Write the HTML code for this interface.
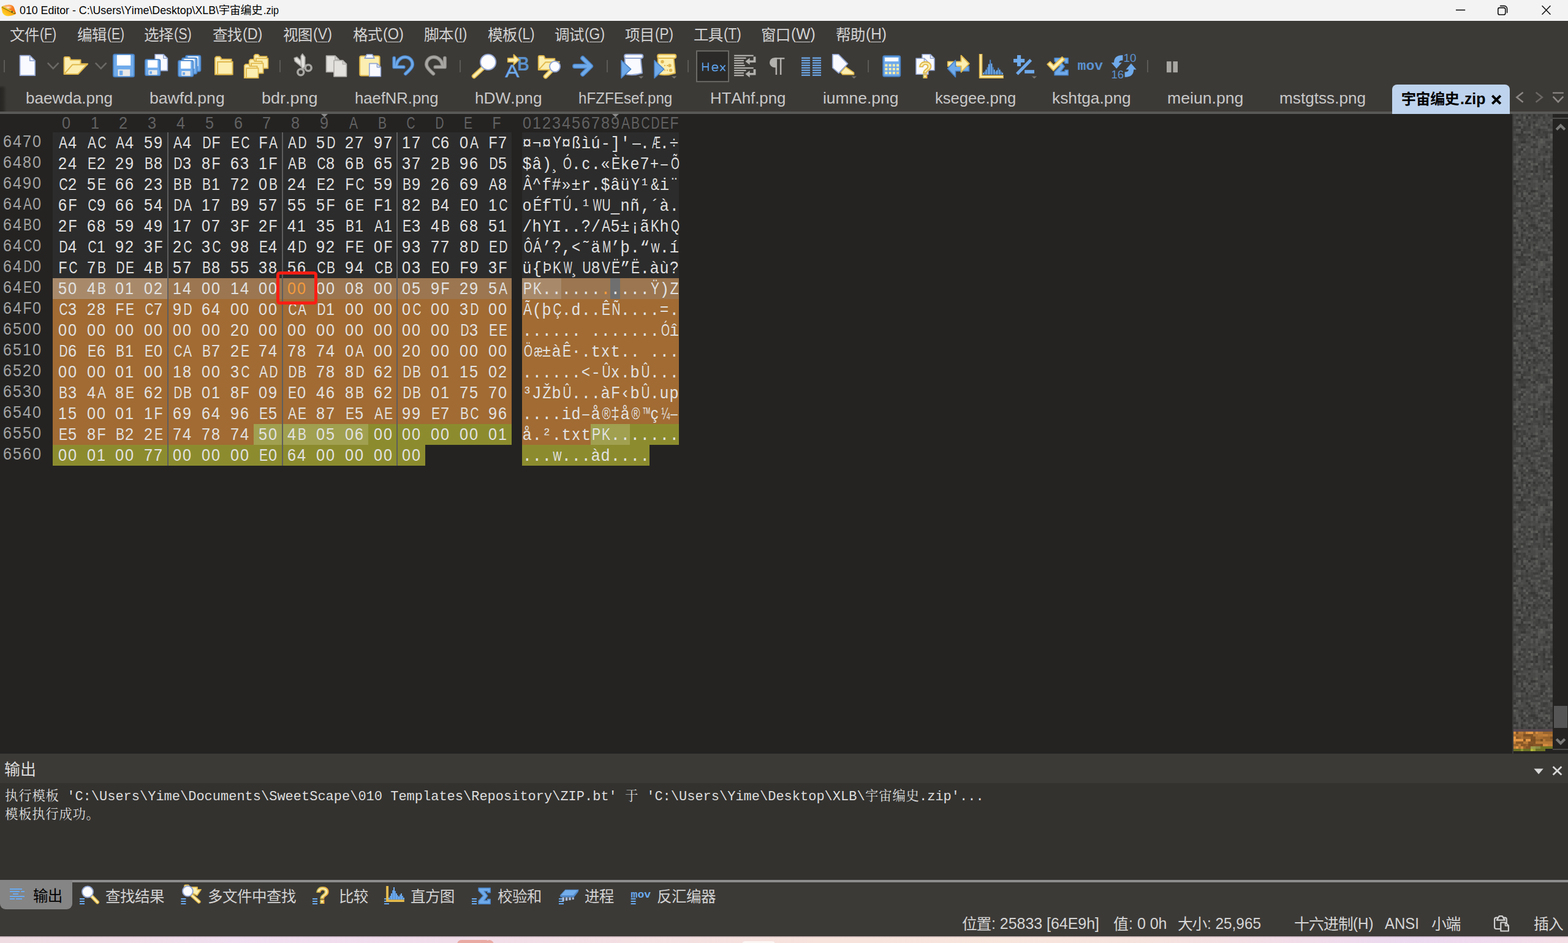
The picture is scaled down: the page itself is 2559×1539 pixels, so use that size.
<!DOCTYPE html>
<html lang="zh"><head><meta charset="utf-8"><title>010 Editor</title><style>
html,body{margin:0;padding:0;background:#3c3a37;}
body{width:2559px;height:1539px;position:relative;overflow:hidden;font-family:"Liberation Sans",sans-serif;font-kerning:none;}
div,span,svg,b,i{position:absolute;box-sizing:border-box}
.t{white-space:pre;transform-origin:0 0;line-height:1}

.r{left:0;width:1120px;height:34px;white-space:nowrap}
.ad{left:4px;top:0;height:34px;color:#a3a3a3}
.hx{left:86.0px;top:0;height:34px;color:#e2e2e2;font-size:0}
.as{left:852.0px;top:0;height:34px;color:#e2e2e2;font-size:0}
.r b{position:static;display:inline-block;width:46.8px;padding-left:7.80px;font-weight:normal;height:34px}
.r i{position:static;display:inline-block;width:16.0px;text-align:center;font-style:normal;font-size:28px;line-height:30px;height:34px;overflow:visible}
.r .hx i,.r .as i{line-height:34px}
.r.hd .hx i,.r.hd .as i{color:#626262;line-height:37px}
.k50{transform:scaleX(0.50)}.k53{transform:scaleX(0.53)}.k56{transform:scaleX(0.56)}.k60{transform:scaleX(0.60)}.k64{transform:scaleX(0.64)}.k68{transform:scaleX(0.68)}.k69{transform:scaleX(0.69)}.k74{transform:scaleX(0.74)}.k75{transform:scaleX(0.75)}.k82{transform:scaleX(0.82)}.k86{transform:scaleX(0.86)}.k90{transform:scaleX(0.90)}.r i.km{font-family:"Liberation Mono";transform:scaleX(.95);font-size:27.5px}.o{font-family:"Liberation Mono";font-size:22px;color:#dedede;white-space:pre;line-height:1;letter-spacing:0}</style></head><body><div style="left:0px;top:0px;width:2559px;height:34px;background:#f3f3f3;"></div>
<div style="left:0px;top:34px;width:2559px;height:148px;background:#3c3a37;"></div>
<div style="left:0px;top:182px;width:2559px;height:4px;background:#595957;"></div>
<div style="left:0px;top:186px;width:2559px;height:1044px;background:#242322;"></div>
<div style="left:0px;top:1230px;width:2559px;height:48px;background:#3c3a37;"></div>
<div style="left:0px;top:1278px;width:2559px;height:158px;background:#33322f;"></div>
<div style="left:0px;top:1436px;width:2559px;height:92px;background:#3c3a37;"></div>
<div style="left:0px;top:1528px;width:2559px;height:11px;background:linear-gradient(90deg,#efdce2 0%,#f0dce6 8%,#f1def0 15%,#f0dcec 25%,#f4dfe3 40%,#f7e2dc 52%,#f8e5dc 64%,#f6e2de 74%,#f2dde8 82%,#ecd9f0 90%,#f0daee 95%,#f5e0e6 100%);"></div>
<div style="left:86.0px;top:216px;width:748.8px;height:238px;background:#2c2c2c;"></div>
<div style="left:852.0px;top:216px;width:256.0px;height:238px;background:#2c2c2c;"></div>
<div style="left:86.0px;top:454px;width:748.8px;height:34px;background:#9b7650;"></div>
<div style="left:86.0px;top:454px;width:187.2px;height:34px;background:#a88a6b;"></div>
<div style="left:852.0px;top:454px;width:256.0px;height:34px;background:#9b7650;"></div>
<div style="left:852.0px;top:454px;width:64.0px;height:34px;background:#a88a6b;"></div>
<div style="left:996.0px;top:454px;width:16.0px;height:34px;background:#6f6f6f;"></div>
<div style="left:86.0px;top:488px;width:748.8px;height:204px;background:#a16b33;"></div>
<div style="left:852.0px;top:488px;width:256.0px;height:204px;background:#a16b33;"></div>
<div style="left:86.0px;top:692px;width:327.59999999999997px;height:34px;background:#a16b33;"></div>
<div style="left:413.59999999999997px;top:692px;width:187.2px;height:34px;background:#a0a050;"></div>
<div style="left:600.8px;top:692px;width:234.0px;height:34px;background:#8c8c2e;"></div>
<div style="left:852.0px;top:692px;width:112.0px;height:34px;background:#a16b33;"></div>
<div style="left:964.0px;top:692px;width:64.0px;height:34px;background:#a0a050;"></div>
<div style="left:1028.0px;top:692px;width:80.0px;height:34px;background:#8c8c2e;"></div>
<div style="left:86.0px;top:726px;width:608.4px;height:34px;background:#8c8c2e;"></div>
<div style="left:852.0px;top:726px;width:208.0px;height:34px;background:#8c8c2e;"></div>
<div style="left:273px;top:216px;width:2px;height:544px;background:#5e5e5e;"></div>
<div style="left:460px;top:216px;width:2px;height:544px;background:#5e5e5e;"></div>
<div style="left:647px;top:216px;width:2px;height:544px;background:#5e5e5e;"></div>
<div class="r hd" style="top:182px"><div class="hx"><b><i class="k90" style="margin-left:6px">0</i></b><b><i class="k90" style="margin-left:6px">1</i></b><b><i class="k90" style="margin-left:6px">2</i></b><b><i class="k90" style="margin-left:6px">3</i></b><b><i class="k90" style="margin-left:6px">4</i></b><b><i class="k90" style="margin-left:6px">5</i></b><b><i class="k90" style="margin-left:6px">6</i></b><b><i class="k90" style="margin-left:6px">7</i></b><b><i class="k90" style="margin-left:6px">8</i></b><b><i class="k90" style="margin-left:6px">9</i></b><b><i class="k75" style="margin-left:6px">A</i></b><b><i class="k75" style="margin-left:6px">B</i></b><b><i class="k69" style="margin-left:6px">C</i></b><b><i class="k69" style="margin-left:6px">D</i></b><b><i class="k75" style="margin-left:6px">E</i></b><b><i class="k82" style="margin-left:6px">F</i></b></div><div class="as"><i class="k90">0</i><i class="k90">1</i><i class="k90">2</i><i class="k90">3</i><i class="k90">4</i><i class="k90">5</i><i class="k90">6</i><i class="k90">7</i><i class="k90">8</i><i class="k90">9</i><i class="k75">A</i><i class="k75">B</i><i class="k69">C</i><i class="k69">D</i><i class="k75">E</i><i class="k82">F</i></div></div>
<div class="r" style="top:216px"><div class="ad" style="font-size:0"><i class="k90">6</i><i class="k90">4</i><i class="k90">7</i><i class="k90">0</i></div><div class="hx"><b><i class="k75">A</i><i class="k90">4</i></b><b><i class="k75">A</i><i class="k69">C</i></b><b><i class="k75">A</i><i class="k90">4</i></b><b><i class="k90">5</i><i class="k90">9</i></b><b><i class="k75">A</i><i class="k90">4</i></b><b><i class="k69">D</i><i class="k82">F</i></b><b><i class="k75">E</i><i class="k69">C</i></b><b><i class="k82">F</i><i class="k75">A</i></b><b><i class="k75">A</i><i class="k69">D</i></b><b><i class="k90">5</i><i class="k69">D</i></b><b><i class="k90">2</i><i class="k90">7</i></b><b><i class="k90">9</i><i class="k90">7</i></b><b><i class="k90">1</i><i class="k90">7</i></b><b><i class="k69">C</i><i class="k90">6</i></b><b><i class="k90">0</i><i class="k75">A</i></b><b><i class="k82">F</i><i class="k90">7</i></b></div><div class="as"><i class="k90">¤</i><i class="k86">¬</i><i class="k90">¤</i><i class="k75">Y</i><i class="k90">¤</i><i class="k82">ß</i><i class="km">ì</i><i class="k90">ú</i><i class="km">-</i><i class="km">]</i><i class="km">'</i><i class="k50">—</i><i class="km">.</i><i class="k50">Æ</i><i class="km">.</i><i class="k90">÷</i></div></div>
<div class="r" style="top:250px"><div class="ad" style="font-size:0"><i class="k90">6</i><i class="k90">4</i><i class="k90">8</i><i class="k90">0</i></div><div class="hx"><b><i class="k90">2</i><i class="k90">4</i></b><b><i class="k75">E</i><i class="k90">2</i></b><b><i class="k90">2</i><i class="k90">9</i></b><b><i class="k75">B</i><i class="k90">8</i></b><b><i class="k69">D</i><i class="k90">3</i></b><b><i class="k90">8</i><i class="k82">F</i></b><b><i class="k90">6</i><i class="k90">3</i></b><b><i class="k90">1</i><i class="k82">F</i></b><b><i class="k75">A</i><i class="k75">B</i></b><b><i class="k69">C</i><i class="k90">8</i></b><b><i class="k90">6</i><i class="k75">B</i></b><b><i class="k90">6</i><i class="k90">5</i></b><b><i class="k90">3</i><i class="k90">7</i></b><b><i class="k90">2</i><i class="k75">B</i></b><b><i class="k90">9</i><i class="k90">6</i></b><b><i class="k69">D</i><i class="k90">5</i></b></div><div class="as"><i class="k90">$</i><i class="k90">â</i><i class="km">)</i><i class="km">¸</i><i class="k64">Ó</i><i class="km">.</i><i class="k90">c</i><i class="km">.</i><i class="k90">«</i><i class="k75">È</i><i class="k90">k</i><i class="k90">e</i><i class="k90">7</i><i class="k86">+</i><i class="k74">–</i><i class="k64">Õ</i></div></div>
<div class="r" style="top:284px"><div class="ad" style="font-size:0"><i class="k90">6</i><i class="k90">4</i><i class="k90">9</i><i class="k90">0</i></div><div class="hx"><b><i class="k69">C</i><i class="k90">2</i></b><b><i class="k90">5</i><i class="k75">E</i></b><b><i class="k90">6</i><i class="k90">6</i></b><b><i class="k90">2</i><i class="k90">3</i></b><b><i class="k75">B</i><i class="k75">B</i></b><b><i class="k75">B</i><i class="k90">1</i></b><b><i class="k90">7</i><i class="k90">2</i></b><b><i class="k90">0</i><i class="k75">B</i></b><b><i class="k90">2</i><i class="k90">4</i></b><b><i class="k75">E</i><i class="k90">2</i></b><b><i class="k82">F</i><i class="k69">C</i></b><b><i class="k90">5</i><i class="k90">9</i></b><b><i class="k75">B</i><i class="k90">9</i></b><b><i class="k90">2</i><i class="k90">6</i></b><b><i class="k90">6</i><i class="k90">9</i></b><b><i class="k75">A</i><i class="k90">8</i></b></div><div class="as"><i class="k75">Â</i><i class="k90">^</i><i class="km">f</i><i class="k90">#</i><i class="k90">»</i><i class="k90">±</i><i class="km">r</i><i class="km">.</i><i class="k90">$</i><i class="k90">â</i><i class="k90">ü</i><i class="k75">Y</i><i class="km">¹</i><i class="k75">&amp;</i><i class="km">i</i><i class="km">¨</i></div></div>
<div class="r" style="top:318px"><div class="ad" style="font-size:0"><i class="k90">6</i><i class="k90">4</i><i class="k75">A</i><i class="k90">0</i></div><div class="hx"><b><i class="k90">6</i><i class="k82">F</i></b><b><i class="k69">C</i><i class="k90">9</i></b><b><i class="k90">6</i><i class="k90">6</i></b><b><i class="k90">5</i><i class="k90">4</i></b><b><i class="k69">D</i><i class="k75">A</i></b><b><i class="k90">1</i><i class="k90">7</i></b><b><i class="k75">B</i><i class="k90">9</i></b><b><i class="k90">5</i><i class="k90">7</i></b><b><i class="k90">5</i><i class="k90">5</i></b><b><i class="k90">5</i><i class="k82">F</i></b><b><i class="k90">6</i><i class="k75">E</i></b><b><i class="k82">F</i><i class="k90">1</i></b><b><i class="k90">8</i><i class="k90">2</i></b><b><i class="k75">B</i><i class="k90">4</i></b><b><i class="k75">E</i><i class="k90">0</i></b><b><i class="k90">1</i><i class="k69">C</i></b></div><div class="as"><i class="k90">o</i><i class="k75">É</i><i class="km">f</i><i class="k82">T</i><i class="k69">Ú</i><i class="km">.</i><i class="km">¹</i><i class="k53">W</i><i class="k69">U</i><i class="k90">_</i><i class="k90">n</i><i class="k90">ñ</i><i class="km">‚</i><i class="km">´</i><i class="k90">à</i><i class="km">.</i></div></div>
<div class="r" style="top:352px"><div class="ad" style="font-size:0"><i class="k90">6</i><i class="k90">4</i><i class="k75">B</i><i class="k90">0</i></div><div class="hx"><b><i class="k90">2</i><i class="k82">F</i></b><b><i class="k90">6</i><i class="k90">8</i></b><b><i class="k90">5</i><i class="k90">9</i></b><b><i class="k90">4</i><i class="k90">9</i></b><b><i class="k90">1</i><i class="k90">7</i></b><b><i class="k90">0</i><i class="k90">7</i></b><b><i class="k90">3</i><i class="k82">F</i></b><b><i class="k90">2</i><i class="k82">F</i></b><b><i class="k90">4</i><i class="k90">1</i></b><b><i class="k90">3</i><i class="k90">5</i></b><b><i class="k75">B</i><i class="k90">1</i></b><b><i class="k75">A</i><i class="k90">1</i></b><b><i class="k75">E</i><i class="k90">3</i></b><b><i class="k90">4</i><i class="k75">B</i></b><b><i class="k90">6</i><i class="k90">8</i></b><b><i class="k90">5</i><i class="k90">1</i></b></div><div class="as"><i class="km">/</i><i class="k90">h</i><i class="k75">Y</i><i class="km">I</i><i class="km">.</i><i class="km">.</i><i class="k90">?</i><i class="km">/</i><i class="k75">A</i><i class="k90">5</i><i class="k90">±</i><i class="km">¡</i><i class="k90">ã</i><i class="k75">K</i><i class="k90">h</i><i class="k64">Q</i></div></div>
<div class="r" style="top:386px"><div class="ad" style="font-size:0"><i class="k90">6</i><i class="k90">4</i><i class="k69">C</i><i class="k90">0</i></div><div class="hx"><b><i class="k69">D</i><i class="k90">4</i></b><b><i class="k69">C</i><i class="k90">1</i></b><b><i class="k90">9</i><i class="k90">2</i></b><b><i class="k90">3</i><i class="k82">F</i></b><b><i class="k90">2</i><i class="k69">C</i></b><b><i class="k90">3</i><i class="k69">C</i></b><b><i class="k90">9</i><i class="k90">8</i></b><b><i class="k75">E</i><i class="k90">4</i></b><b><i class="k90">4</i><i class="k69">D</i></b><b><i class="k90">9</i><i class="k90">2</i></b><b><i class="k82">F</i><i class="k75">E</i></b><b><i class="k90">0</i><i class="k82">F</i></b><b><i class="k90">9</i><i class="k90">3</i></b><b><i class="k90">7</i><i class="k90">7</i></b><b><i class="k90">8</i><i class="k69">D</i></b><b><i class="k75">E</i><i class="k69">D</i></b></div><div class="as"><i class="k64">Ô</i><i class="k75">Á</i><i class="km">’</i><i class="k90">?</i><i class="km">,</i><i class="k86">&lt;</i><i class="km">˜</i><i class="k90">ä</i><i class="k60">M</i><i class="km">’</i><i class="k90">þ</i><i class="km">.</i><i class="km">“</i><i class="k69">w</i><i class="km">.</i><i class="km">í</i></div></div>
<div class="r" style="top:420px"><div class="ad" style="font-size:0"><i class="k90">6</i><i class="k90">4</i><i class="k69">D</i><i class="k90">0</i></div><div class="hx"><b><i class="k82">F</i><i class="k69">C</i></b><b><i class="k90">7</i><i class="k75">B</i></b><b><i class="k69">D</i><i class="k75">E</i></b><b><i class="k90">4</i><i class="k75">B</i></b><b><i class="k90">5</i><i class="k90">7</i></b><b><i class="k75">B</i><i class="k90">8</i></b><b><i class="k90">5</i><i class="k90">5</i></b><b><i class="k90">3</i><i class="k90">8</i></b><b><i class="k90">5</i><i class="k90">6</i></b><b><i class="k69">C</i><i class="k75">B</i></b><b><i class="k90">9</i><i class="k90">4</i></b><b><i class="k69">C</i><i class="k75">B</i></b><b><i class="k90">0</i><i class="k90">3</i></b><b><i class="k75">E</i><i class="k90">0</i></b><b><i class="k82">F</i><i class="k90">9</i></b><b><i class="k90">3</i><i class="k82">F</i></b></div><div class="as"><i class="k90">ü</i><i class="km">{</i><i class="k75">Þ</i><i class="k75">K</i><i class="k53">W</i><i class="km">¸</i><i class="k69">U</i><i class="k90">8</i><i class="k75">V</i><i class="k75">Ë</i><i class="km">”</i><i class="k75">Ë</i><i class="km">.</i><i class="k90">à</i><i class="k90">ù</i><i class="k90">?</i></div></div>
<div class="r" style="top:454px"><div class="ad" style="font-size:0"><i class="k90">6</i><i class="k90">4</i><i class="k75">E</i><i class="k90">0</i></div><div class="hx"><b><i class="k90">5</i><i class="k90">0</i></b><b><i class="k90">4</i><i class="k75">B</i></b><b><i class="k90">0</i><i class="k90">1</i></b><b><i class="k90">0</i><i class="k90">2</i></b><b><i class="k90">1</i><i class="k90">4</i></b><b><i class="k90">0</i><i class="k90">0</i></b><b><i class="k90">1</i><i class="k90">4</i></b><b><i class="k90">0</i><i class="k90">0</i></b><b style="color:#f39a3d"><i class="k90">0</i><i class="k90">0</i></b><b><i class="k90">0</i><i class="k90">0</i></b><b><i class="k90">0</i><i class="k90">8</i></b><b><i class="k90">0</i><i class="k90">0</i></b><b><i class="k90">0</i><i class="k90">5</i></b><b><i class="k90">9</i><i class="k82">F</i></b><b><i class="k90">2</i><i class="k90">9</i></b><b><i class="k90">5</i><i class="k75">A</i></b></div><div class="as"><i class="k75">P</i><i class="k75">K</i><i class="km">.</i><i class="km">.</i><i class="km">.</i><i class="km">.</i><i class="km">.</i><i class="km">.</i><i class="km" style="color:#f39a3d">.</i><i class="km">.</i><i class="km">.</i><i class="km">.</i><i class="km">.</i><i class="k75">Ÿ</i><i class="km">)</i><i class="k82">Z</i></div></div>
<div class="r" style="top:488px"><div class="ad" style="font-size:0"><i class="k90">6</i><i class="k90">4</i><i class="k82">F</i><i class="k90">0</i></div><div class="hx"><b><i class="k69">C</i><i class="k90">3</i></b><b><i class="k90">2</i><i class="k90">8</i></b><b><i class="k82">F</i><i class="k75">E</i></b><b><i class="k69">C</i><i class="k90">7</i></b><b><i class="k90">9</i><i class="k69">D</i></b><b><i class="k90">6</i><i class="k90">4</i></b><b><i class="k90">0</i><i class="k90">0</i></b><b><i class="k90">0</i><i class="k90">0</i></b><b><i class="k69">C</i><i class="k75">A</i></b><b><i class="k69">D</i><i class="k90">1</i></b><b><i class="k90">0</i><i class="k90">0</i></b><b><i class="k90">0</i><i class="k90">0</i></b><b><i class="k90">0</i><i class="k69">C</i></b><b><i class="k90">0</i><i class="k90">0</i></b><b><i class="k90">3</i><i class="k69">D</i></b><b><i class="k90">0</i><i class="k90">0</i></b></div><div class="as"><i class="k75">Ã</i><i class="km">(</i><i class="k90">þ</i><i class="k69">Ç</i><i class="km">.</i><i class="k90">d</i><i class="km">.</i><i class="km">.</i><i class="k75">Ê</i><i class="k69">Ñ</i><i class="km">.</i><i class="km">.</i><i class="km">.</i><i class="km">.</i><i class="k86">=</i><i class="km">.</i></div></div>
<div class="r" style="top:522px"><div class="ad" style="font-size:0"><i class="k90">6</i><i class="k90">5</i><i class="k90">0</i><i class="k90">0</i></div><div class="hx"><b><i class="k90">0</i><i class="k90">0</i></b><b><i class="k90">0</i><i class="k90">0</i></b><b><i class="k90">0</i><i class="k90">0</i></b><b><i class="k90">0</i><i class="k90">0</i></b><b><i class="k90">0</i><i class="k90">0</i></b><b><i class="k90">0</i><i class="k90">0</i></b><b><i class="k90">2</i><i class="k90">0</i></b><b><i class="k90">0</i><i class="k90">0</i></b><b><i class="k90">0</i><i class="k90">0</i></b><b><i class="k90">0</i><i class="k90">0</i></b><b><i class="k90">0</i><i class="k90">0</i></b><b><i class="k90">0</i><i class="k90">0</i></b><b><i class="k90">0</i><i class="k90">0</i></b><b><i class="k90">0</i><i class="k90">0</i></b><b><i class="k69">D</i><i class="k90">3</i></b><b><i class="k75">E</i><i class="k75">E</i></b></div><div class="as"><i class="km">.</i><i class="km">.</i><i class="km">.</i><i class="km">.</i><i class="km">.</i><i class="km">.</i><i class="k90">&nbsp;</i><i class="km">.</i><i class="km">.</i><i class="km">.</i><i class="km">.</i><i class="km">.</i><i class="km">.</i><i class="km">.</i><i class="k64">Ó</i><i class="km">î</i></div></div>
<div class="r" style="top:556px"><div class="ad" style="font-size:0"><i class="k90">6</i><i class="k90">5</i><i class="k90">1</i><i class="k90">0</i></div><div class="hx"><b><i class="k69">D</i><i class="k90">6</i></b><b><i class="k75">E</i><i class="k90">6</i></b><b><i class="k75">B</i><i class="k90">1</i></b><b><i class="k75">E</i><i class="k90">0</i></b><b><i class="k69">C</i><i class="k75">A</i></b><b><i class="k75">B</i><i class="k90">7</i></b><b><i class="k90">2</i><i class="k75">E</i></b><b><i class="k90">7</i><i class="k90">4</i></b><b><i class="k90">7</i><i class="k90">8</i></b><b><i class="k90">7</i><i class="k90">4</i></b><b><i class="k90">0</i><i class="k75">A</i></b><b><i class="k90">0</i><i class="k90">0</i></b><b><i class="k90">2</i><i class="k90">0</i></b><b><i class="k90">0</i><i class="k90">0</i></b><b><i class="k90">0</i><i class="k90">0</i></b><b><i class="k90">0</i><i class="k90">0</i></b></div><div class="as"><i class="k64">Ö</i><i class="k56">æ</i><i class="k90">±</i><i class="k90">à</i><i class="k75">Ê</i><i class="km">·</i><i class="km">.</i><i class="km">t</i><i class="k90">x</i><i class="km">t</i><i class="km">.</i><i class="km">.</i><i class="k90">&nbsp;</i><i class="km">.</i><i class="km">.</i><i class="km">.</i></div></div>
<div class="r" style="top:590px"><div class="ad" style="font-size:0"><i class="k90">6</i><i class="k90">5</i><i class="k90">2</i><i class="k90">0</i></div><div class="hx"><b><i class="k90">0</i><i class="k90">0</i></b><b><i class="k90">0</i><i class="k90">0</i></b><b><i class="k90">0</i><i class="k90">1</i></b><b><i class="k90">0</i><i class="k90">0</i></b><b><i class="k90">1</i><i class="k90">8</i></b><b><i class="k90">0</i><i class="k90">0</i></b><b><i class="k90">3</i><i class="k69">C</i></b><b><i class="k75">A</i><i class="k69">D</i></b><b><i class="k69">D</i><i class="k75">B</i></b><b><i class="k90">7</i><i class="k90">8</i></b><b><i class="k90">8</i><i class="k69">D</i></b><b><i class="k90">6</i><i class="k90">2</i></b><b><i class="k69">D</i><i class="k75">B</i></b><b><i class="k90">0</i><i class="k90">1</i></b><b><i class="k90">1</i><i class="k90">5</i></b><b><i class="k90">0</i><i class="k90">2</i></b></div><div class="as"><i class="km">.</i><i class="km">.</i><i class="km">.</i><i class="km">.</i><i class="km">.</i><i class="km">.</i><i class="k86">&lt;</i><i class="km">-</i><i class="k69">Û</i><i class="k90">x</i><i class="km">.</i><i class="k90">b</i><i class="k69">Û</i><i class="km">.</i><i class="km">.</i><i class="km">.</i></div></div>
<div class="r" style="top:624px"><div class="ad" style="font-size:0"><i class="k90">6</i><i class="k90">5</i><i class="k90">3</i><i class="k90">0</i></div><div class="hx"><b><i class="k75">B</i><i class="k90">3</i></b><b><i class="k90">4</i><i class="k75">A</i></b><b><i class="k90">8</i><i class="k75">E</i></b><b><i class="k90">6</i><i class="k90">2</i></b><b><i class="k69">D</i><i class="k75">B</i></b><b><i class="k90">0</i><i class="k90">1</i></b><b><i class="k90">8</i><i class="k82">F</i></b><b><i class="k90">0</i><i class="k90">9</i></b><b><i class="k75">E</i><i class="k90">0</i></b><b><i class="k90">4</i><i class="k90">6</i></b><b><i class="k90">8</i><i class="k75">B</i></b><b><i class="k90">6</i><i class="k90">2</i></b><b><i class="k69">D</i><i class="k75">B</i></b><b><i class="k90">0</i><i class="k90">1</i></b><b><i class="k90">7</i><i class="k90">5</i></b><b><i class="k90">7</i><i class="k90">0</i></b></div><div class="as"><i class="km">³</i><i class="k90">J</i><i class="k82">Ž</i><i class="k90">b</i><i class="k69">Û</i><i class="km">.</i><i class="km">.</i><i class="km">.</i><i class="k90">à</i><i class="k82">F</i><i class="km">‹</i><i class="k90">b</i><i class="k69">Û</i><i class="km">.</i><i class="k90">u</i><i class="k90">p</i></div></div>
<div class="r" style="top:658px"><div class="ad" style="font-size:0"><i class="k90">6</i><i class="k90">5</i><i class="k90">4</i><i class="k90">0</i></div><div class="hx"><b><i class="k90">1</i><i class="k90">5</i></b><b><i class="k90">0</i><i class="k90">0</i></b><b><i class="k90">0</i><i class="k90">1</i></b><b><i class="k90">1</i><i class="k82">F</i></b><b><i class="k90">6</i><i class="k90">9</i></b><b><i class="k90">6</i><i class="k90">4</i></b><b><i class="k90">9</i><i class="k90">6</i></b><b><i class="k75">E</i><i class="k90">5</i></b><b><i class="k75">A</i><i class="k75">E</i></b><b><i class="k90">8</i><i class="k90">7</i></b><b><i class="k75">E</i><i class="k90">5</i></b><b><i class="k75">A</i><i class="k75">E</i></b><b><i class="k90">9</i><i class="k90">9</i></b><b><i class="k75">E</i><i class="k90">7</i></b><b><i class="k75">B</i><i class="k69">C</i></b><b><i class="k90">9</i><i class="k90">6</i></b></div><div class="as"><i class="km">.</i><i class="km">.</i><i class="km">.</i><i class="km">.</i><i class="km">i</i><i class="k90">d</i><i class="k74">–</i><i class="k90">å</i><i class="k68">®</i><i class="k90">‡</i><i class="k90">å</i><i class="k68">®</i><i class="k50">™</i><i class="k90">ç</i><i class="k60">¼</i><i class="k74">–</i></div></div>
<div class="r" style="top:692px"><div class="ad" style="font-size:0"><i class="k90">6</i><i class="k90">5</i><i class="k90">5</i><i class="k90">0</i></div><div class="hx"><b><i class="k75">E</i><i class="k90">5</i></b><b><i class="k90">8</i><i class="k82">F</i></b><b><i class="k75">B</i><i class="k90">2</i></b><b><i class="k90">2</i><i class="k75">E</i></b><b><i class="k90">7</i><i class="k90">4</i></b><b><i class="k90">7</i><i class="k90">8</i></b><b><i class="k90">7</i><i class="k90">4</i></b><b><i class="k90">5</i><i class="k90">0</i></b><b><i class="k90">4</i><i class="k75">B</i></b><b><i class="k90">0</i><i class="k90">5</i></b><b><i class="k90">0</i><i class="k90">6</i></b><b><i class="k90">0</i><i class="k90">0</i></b><b><i class="k90">0</i><i class="k90">0</i></b><b><i class="k90">0</i><i class="k90">0</i></b><b><i class="k90">0</i><i class="k90">0</i></b><b><i class="k90">0</i><i class="k90">1</i></b></div><div class="as"><i class="k90">å</i><i class="km">.</i><i class="km">²</i><i class="km">.</i><i class="km">t</i><i class="k90">x</i><i class="km">t</i><i class="k75">P</i><i class="k75">K</i><i class="km">.</i><i class="km">.</i><i class="km">.</i><i class="km">.</i><i class="km">.</i><i class="km">.</i><i class="km">.</i></div></div>
<div class="r" style="top:726px"><div class="ad" style="font-size:0"><i class="k90">6</i><i class="k90">5</i><i class="k90">6</i><i class="k90">0</i></div><div class="hx"><b><i class="k90">0</i><i class="k90">0</i></b><b><i class="k90">0</i><i class="k90">1</i></b><b><i class="k90">0</i><i class="k90">0</i></b><b><i class="k90">7</i><i class="k90">7</i></b><b><i class="k90">0</i><i class="k90">0</i></b><b><i class="k90">0</i><i class="k90">0</i></b><b><i class="k90">0</i><i class="k90">0</i></b><b><i class="k75">E</i><i class="k90">0</i></b><b><i class="k90">6</i><i class="k90">4</i></b><b><i class="k90">0</i><i class="k90">0</i></b><b><i class="k90">0</i><i class="k90">0</i></b><b><i class="k90">0</i><i class="k90">0</i></b><b><i class="k90">0</i><i class="k90">0</i></b></div><div class="as"><i class="km">.</i><i class="km">.</i><i class="km">.</i><i class="k69">w</i><i class="km">.</i><i class="km">.</i><i class="km">.</i><i class="k90">à</i><i class="k90">d</i><i class="km">.</i><i class="km">.</i><i class="km">.</i><i class="km">.</i></div></div>
<div style="left:450.8px;top:443.4px;width:67.6px;height:53.2px;border:5.1px solid #fa1e14;border-radius:5.5px"></div>
<div style="left:0px;top:33px;width:2559px;height:1px;background:#fbfbfb;"></div>
<svg style="left:32.20px;top:4.20px;overflow:visible" width="331.0" height="27.0"><text x="0" y="18.6" font-family="Liberation Sans" font-size="18.6" fill="#000" textLength="325.00" lengthAdjust="spacingAndGlyphs" style="white-space:pre">010 Editor - C:\Users\Yime\Desktop\XLB\</text></svg>
<svg style="position:absolute;left:357.30px;top:5.36px;overflow:visible" width="71.40" height="24.00"><text x="0" y="17.84" font-family="'Liberation Sans','Noto Sans CJK SC',sans-serif" font-size="18" fill="#000" textLength="71.4" lengthAdjust="spacing">宇宙编史</text></svg>
<svg style="left:430.20px;top:4.20px;overflow:visible" width="31.0" height="27.0"><text x="0" y="18.6" font-family="Liberation Sans" font-size="18.6" fill="#000" textLength="25.00" lengthAdjust="spacingAndGlyphs" style="white-space:pre">.zip</text></svg>
<svg style="left:2370px;top:4px" width="170" height="26" fill="none" stroke="#111" stroke-width="1.6">
<path d="M6 12.4h15.2"/>
<rect x="74.8" y="8.6" width="12" height="11.4" rx="2.6"/>
<path d="M78.6 5.6h6.4a4.6 4.6 0 0 1 4.6 4.6v6.4" stroke-linecap="round"/>
<path d="M147 5.8l13 13.4M160 5.8l-13 13.4" stroke-linecap="round"/></svg>
<svg style="left:1px;top:6px" width="27" height="22" viewBox="0 0 27 22">
<defs><linearGradient id="lg1" x1="0" y1="1" x2="1" y2="0"><stop offset="0" stop-color="#ffe838"/><stop offset=".4" stop-color="#ffb414"/><stop offset="1" stop-color="#f26a0c"/></linearGradient>
<linearGradient id="lg2" x1="0" y1="0" x2="1" y2="1"><stop offset="0" stop-color="#ffcf9a"/><stop offset=".45" stop-color="#f8862a"/><stop offset="1" stop-color="#ee5e08"/></linearGradient>
<radialGradient id="lg3" cx=".5" cy=".5" r=".5"><stop offset="0" stop-color="#fff" stop-opacity=".85"/><stop offset="1" stop-color="#fff" stop-opacity="0"/></radialGradient></defs>
<path d="M1.2 5.6C4.4 3.2 9 1.8 13.2 1.8C17.8 1.9 20.6 3.6 21.6 6L25.2 16.6C22 18.4 15.8 20.6 11.4 20.2C7.6 19.8 4.4 17.6 3 14.4Z" fill="url(#lg1)"/>
<path d="M3.6 5.2C7 2.8 10.4 1.8 13.2 1.8C17.8 1.9 20.6 3.6 21.6 6L25.2 16.6L20 13.4Z" fill="url(#lg2)"/>
<ellipse cx="12.4" cy="6.4" rx="6.4" ry="3" fill="url(#lg3)" transform="rotate(-8 12.4 6.4)"/>
<path d="M3.6 5.6L22.8 15.6" stroke="#7a6210" stroke-width="2.5" stroke-linecap="round"/>
<path d="M3.8 5.2L22 14.6" stroke="#f4e42e" stroke-width="1.5" stroke-linecap="round"/>
<rect x="17.6" y="12.2" width="2" height="2" fill="#33332a" transform="rotate(27 18.6 13.2)"/></svg>
<svg style="position:absolute;left:16.20px;top:41.75px;overflow:visible" width="48.40" height="30.60"><text x="0" y="23.65" font-family="'Liberation Sans','Noto Sans CJK SC',sans-serif" font-size="24.6" fill="#d4d4d4" textLength="48.4" lengthAdjust="spacing">文件</text></svg>
<svg style="left:65.20px;top:39.40px;overflow:visible" width="33.2" height="36.5"><text x="0" y="25.2" font-family="Liberation Sans" font-size="25.2" fill="#d4d4d4" textLength="27.20" lengthAdjust="spacingAndGlyphs" style="white-space:pre">(F)</text></svg>
<div style="left:72.3px;top:67.6px;width:13.0px;height:1.6px;background:#d4d4d4;"></div>
<svg style="position:absolute;left:125.50px;top:41.75px;overflow:visible" width="48.40" height="30.60"><text x="0" y="23.65" font-family="'Liberation Sans','Noto Sans CJK SC',sans-serif" font-size="24.6" fill="#d4d4d4" textLength="48.4" lengthAdjust="spacing">编辑</text></svg>
<svg style="left:174.50px;top:39.40px;overflow:visible" width="34.1" height="36.5"><text x="0" y="25.2" font-family="Liberation Sans" font-size="25.2" fill="#d4d4d4" textLength="28.10" lengthAdjust="spacingAndGlyphs" style="white-space:pre">(E)</text></svg>
<div style="left:181.5px;top:67.6px;width:14.1px;height:1.6px;background:#d4d4d4;"></div>
<svg style="position:absolute;left:234.80px;top:41.75px;overflow:visible" width="48.40" height="30.60"><text x="0" y="23.65" font-family="'Liberation Sans','Noto Sans CJK SC',sans-serif" font-size="24.6" fill="#d4d4d4" textLength="48.4" lengthAdjust="spacing">选择</text></svg>
<svg style="left:283.80px;top:39.40px;overflow:visible" width="34.8" height="36.5"><text x="0" y="25.2" font-family="Liberation Sans" font-size="25.2" fill="#d4d4d4" textLength="28.80" lengthAdjust="spacingAndGlyphs" style="white-space:pre">(S)</text></svg>
<div style="left:291.0px;top:67.6px;width:14.4px;height:1.6px;background:#d4d4d4;"></div>
<svg style="position:absolute;left:346.60px;top:41.75px;overflow:visible" width="48.40" height="30.60"><text x="0" y="23.65" font-family="'Liberation Sans','Noto Sans CJK SC',sans-serif" font-size="24.6" fill="#d4d4d4" textLength="48.4" lengthAdjust="spacing">查找</text></svg>
<svg style="left:395.60px;top:39.40px;overflow:visible" width="38.4" height="36.5"><text x="0" y="25.2" font-family="Liberation Sans" font-size="25.2" fill="#d4d4d4" textLength="32.40" lengthAdjust="spacingAndGlyphs" style="white-space:pre">(D)</text></svg>
<div style="left:403.4px;top:67.6px;width:16.9px;height:1.6px;background:#d4d4d4;"></div>
<svg style="position:absolute;left:462.10px;top:41.75px;overflow:visible" width="48.40" height="30.60"><text x="0" y="23.65" font-family="'Liberation Sans','Noto Sans CJK SC',sans-serif" font-size="24.6" fill="#d4d4d4" textLength="48.4" lengthAdjust="spacing">视图</text></svg>
<svg style="left:511.10px;top:39.40px;overflow:visible" width="36.9" height="36.5"><text x="0" y="25.2" font-family="Liberation Sans" font-size="25.2" fill="#d4d4d4" textLength="30.90" lengthAdjust="spacingAndGlyphs" style="white-space:pre">(V)</text></svg>
<div style="left:518.8px;top:67.6px;width:15.5px;height:1.6px;background:#d4d4d4;"></div>
<svg style="position:absolute;left:575.70px;top:41.75px;overflow:visible" width="48.40" height="30.60"><text x="0" y="23.65" font-family="'Liberation Sans','Noto Sans CJK SC',sans-serif" font-size="24.6" fill="#d4d4d4" textLength="48.4" lengthAdjust="spacing">格式</text></svg>
<svg style="left:624.70px;top:39.40px;overflow:visible" width="39.8" height="36.5"><text x="0" y="25.2" font-family="Liberation Sans" font-size="25.2" fill="#d4d4d4" textLength="33.80" lengthAdjust="spacingAndGlyphs" style="white-space:pre">(O)</text></svg>
<div style="left:632.5px;top:67.6px;width:18.2px;height:1.6px;background:#d4d4d4;"></div>
<svg style="position:absolute;left:691.80px;top:41.75px;overflow:visible" width="48.40" height="30.60"><text x="0" y="23.65" font-family="'Liberation Sans','Noto Sans CJK SC',sans-serif" font-size="24.6" fill="#d4d4d4" textLength="48.4" lengthAdjust="spacing">脚本</text></svg>
<svg style="left:740.80px;top:39.40px;overflow:visible" width="27.4" height="36.5"><text x="0" y="25.2" font-family="Liberation Sans" font-size="25.2" fill="#d4d4d4" textLength="21.40" lengthAdjust="spacingAndGlyphs" style="white-space:pre">(I)</text></svg>
<div style="left:748.3px;top:67.6px;width:6.3px;height:1.6px;background:#d4d4d4;"></div>
<svg style="position:absolute;left:796.20px;top:41.75px;overflow:visible" width="48.40" height="30.60"><text x="0" y="23.65" font-family="'Liberation Sans','Noto Sans CJK SC',sans-serif" font-size="24.6" fill="#d4d4d4" textLength="48.4" lengthAdjust="spacing">模板</text></svg>
<svg style="left:845.20px;top:39.40px;overflow:visible" width="33.6" height="36.5"><text x="0" y="25.2" font-family="Liberation Sans" font-size="25.2" fill="#d4d4d4" textLength="27.60" lengthAdjust="spacingAndGlyphs" style="white-space:pre">(L)</text></svg>
<div style="left:852.7px;top:67.6px;width:12.6px;height:1.6px;background:#d4d4d4;"></div>
<svg style="position:absolute;left:905.20px;top:41.75px;overflow:visible" width="48.40" height="30.60"><text x="0" y="23.65" font-family="'Liberation Sans','Noto Sans CJK SC',sans-serif" font-size="24.6" fill="#d4d4d4" textLength="48.4" lengthAdjust="spacing">调试</text></svg>
<svg style="left:954.20px;top:39.40px;overflow:visible" width="39.0" height="36.5"><text x="0" y="25.2" font-family="Liberation Sans" font-size="25.2" fill="#d4d4d4" textLength="33.00" lengthAdjust="spacingAndGlyphs" style="white-space:pre">(G)</text></svg>
<div style="left:961.8px;top:67.6px;width:17.8px;height:1.6px;background:#d4d4d4;"></div>
<svg style="position:absolute;left:1019.90px;top:41.75px;overflow:visible" width="48.40" height="30.60"><text x="0" y="23.65" font-family="'Liberation Sans','Noto Sans CJK SC',sans-serif" font-size="24.6" fill="#d4d4d4" textLength="48.4" lengthAdjust="spacing">项目</text></svg>
<svg style="left:1068.90px;top:39.40px;overflow:visible" width="35.9" height="36.5"><text x="0" y="25.2" font-family="Liberation Sans" font-size="25.2" fill="#d4d4d4" textLength="29.90" lengthAdjust="spacingAndGlyphs" style="white-space:pre">(P)</text></svg>
<div style="left:1076.4px;top:67.6px;width:15.0px;height:1.6px;background:#d4d4d4;"></div>
<svg style="position:absolute;left:1131.80px;top:41.75px;overflow:visible" width="48.40" height="30.60"><text x="0" y="23.65" font-family="'Liberation Sans','Noto Sans CJK SC',sans-serif" font-size="24.6" fill="#d4d4d4" textLength="48.4" lengthAdjust="spacing">工具</text></svg>
<svg style="left:1180.80px;top:39.40px;overflow:visible" width="34.6" height="36.5"><text x="0" y="25.2" font-family="Liberation Sans" font-size="25.2" fill="#d4d4d4" textLength="28.60" lengthAdjust="spacingAndGlyphs" style="white-space:pre">(T)</text></svg>
<div style="left:1188.3px;top:67.6px;width:13.7px;height:1.6px;background:#d4d4d4;"></div>
<svg style="position:absolute;left:1241.80px;top:41.75px;overflow:visible" width="48.40" height="30.60"><text x="0" y="23.65" font-family="'Liberation Sans','Noto Sans CJK SC',sans-serif" font-size="24.6" fill="#d4d4d4" textLength="48.4" lengthAdjust="spacing">窗口</text></svg>
<svg style="left:1290.80px;top:39.40px;overflow:visible" width="45.6" height="36.5"><text x="0" y="25.2" font-family="Liberation Sans" font-size="25.2" fill="#d4d4d4" textLength="39.60" lengthAdjust="spacingAndGlyphs" style="white-space:pre">(W)</text></svg>
<div style="left:1299.0px;top:67.6px;width:23.2px;height:1.6px;background:#d4d4d4;"></div>
<svg style="position:absolute;left:1363.50px;top:41.75px;overflow:visible" width="48.40" height="30.60"><text x="0" y="23.65" font-family="'Liberation Sans','Noto Sans CJK SC',sans-serif" font-size="24.6" fill="#d4d4d4" textLength="48.4" lengthAdjust="spacing">帮助</text></svg>
<svg style="left:1412.50px;top:39.40px;overflow:visible" width="39.9" height="36.5"><text x="0" y="25.2" font-family="Liberation Sans" font-size="25.2" fill="#d4d4d4" textLength="33.90" lengthAdjust="spacingAndGlyphs" style="white-space:pre">(H)</text></svg>
<div style="left:1420.6px;top:67.6px;width:17.6px;height:1.6px;background:#d4d4d4;"></div>
<div style="left:0px;top:140px;width:11px;height:42px;background:linear-gradient(90deg,#272624 0%,#2b2a27 45%,#35332f 75%,#3c3a37 100%);"></div>
<div style="left:0px;top:139px;width:11px;height:5px;background:linear-gradient(180deg,#3c3a37 0%,rgba(60,58,55,0) 100%);"></div>
<svg style="left:42.10px;top:144.20px;overflow:visible" width="147.9" height="36.8"><text x="0" y="25.4" font-family="Liberation Sans" font-size="25.4" fill="#c8c8c8" textLength="141.90" lengthAdjust="spacingAndGlyphs" style="white-space:pre">baewda.png</text></svg>
<svg style="left:244.20px;top:144.20px;overflow:visible" width="128.7" height="36.8"><text x="0" y="25.4" font-family="Liberation Sans" font-size="25.4" fill="#c8c8c8" textLength="122.70" lengthAdjust="spacingAndGlyphs" style="white-space:pre">bawfd.png</text></svg>
<svg style="left:427.10px;top:144.20px;overflow:visible" width="97.4" height="36.8"><text x="0" y="25.4" font-family="Liberation Sans" font-size="25.4" fill="#c8c8c8" textLength="91.40" lengthAdjust="spacingAndGlyphs" style="white-space:pre">bdr.png</text></svg>
<svg style="left:578.70px;top:144.20px;overflow:visible" width="142.6" height="36.8"><text x="0" y="25.4" font-family="Liberation Sans" font-size="25.4" fill="#c8c8c8" textLength="136.60" lengthAdjust="spacingAndGlyphs" style="white-space:pre">haefNR.png</text></svg>
<svg style="left:775.20px;top:144.20px;overflow:visible" width="115.5" height="36.8"><text x="0" y="25.4" font-family="Liberation Sans" font-size="25.4" fill="#c8c8c8" textLength="109.50" lengthAdjust="spacingAndGlyphs" style="white-space:pre">hDW.png</text></svg>
<svg style="left:943.90px;top:144.20px;overflow:visible" width="159.3" height="36.8"><text x="0" y="25.4" font-family="Liberation Sans" font-size="25.4" fill="#c8c8c8" textLength="153.30" lengthAdjust="spacingAndGlyphs" style="white-space:pre">hFZFEsef.png</text></svg>
<svg style="left:1159.20px;top:144.20px;overflow:visible" width="129.4" height="36.8"><text x="0" y="25.4" font-family="Liberation Sans" font-size="25.4" fill="#c8c8c8" textLength="123.40" lengthAdjust="spacingAndGlyphs" style="white-space:pre">HTAhf.png</text></svg>
<svg style="left:1343.20px;top:144.20px;overflow:visible" width="129.4" height="36.8"><text x="0" y="25.4" font-family="Liberation Sans" font-size="25.4" fill="#c8c8c8" textLength="123.40" lengthAdjust="spacingAndGlyphs" style="white-space:pre">iumne.png</text></svg>
<svg style="left:1525.70px;top:144.20px;overflow:visible" width="138.1" height="36.8"><text x="0" y="25.4" font-family="Liberation Sans" font-size="25.4" fill="#c8c8c8" textLength="132.10" lengthAdjust="spacingAndGlyphs" style="white-space:pre">ksegee.png</text></svg>
<svg style="left:1717.30px;top:144.20px;overflow:visible" width="134.7" height="36.8"><text x="0" y="25.4" font-family="Liberation Sans" font-size="25.4" fill="#c8c8c8" textLength="128.70" lengthAdjust="spacingAndGlyphs" style="white-space:pre">kshtga.png</text></svg>
<svg style="left:1904.50px;top:144.20px;overflow:visible" width="130.4" height="36.8"><text x="0" y="25.4" font-family="Liberation Sans" font-size="25.4" fill="#c8c8c8" textLength="124.40" lengthAdjust="spacingAndGlyphs" style="white-space:pre">meiun.png</text></svg>
<svg style="left:2088.10px;top:144.20px;overflow:visible" width="147.1" height="36.8"><text x="0" y="25.4" font-family="Liberation Sans" font-size="25.4" fill="#c8c8c8" textLength="141.10" lengthAdjust="spacingAndGlyphs" style="white-space:pre">mstgtss.png</text></svg>
<div style="left:2272px;top:138px;width:192px;height:48px;background:#bed3ed;border-radius:8px 8px 0 0"></div>
<svg style="position:absolute;left:2286.60px;top:146.68px;overflow:visible" width="94.80" height="30.00"><text x="0" y="23.12" font-family="'Liberation Sans','Noto Sans CJK SC',sans-serif" font-size="24" font-weight="bold" fill="#000" textLength="94.8" lengthAdjust="spacing">宇宙编史</text></svg>
<svg style="left:2382.60px;top:144.60px;overflow:visible" width="47.5" height="36.8"><text x="0" y="25.4" font-family="Liberation Sans" font-size="25.4" font-weight="bold" fill="#000" textLength="41.50" lengthAdjust="spacingAndGlyphs" style="white-space:pre">.zip</text></svg>
<svg style="left:2433px;top:154px" width="19" height="18" stroke="#000" stroke-width="4" fill="none"><path d="M2.4 2.2L15.8 15.4M15.8 2.2L2.4 15.4"/></svg>
<svg style="left:2470px;top:146px" width="88" height="26" fill="none" stroke-width="2.6">
<path d="M15.6 4.8L5.4 12.8L15.6 20.8" stroke="#8b8885"/><path d="M36.6 4.8L46.8 12.8L36.6 20.8" stroke="#6a6764"/>
<path d="M64 5.6h17.8" stroke="#8b8885" stroke-width="2.2"/><path d="M64.6 11.6L72.9 20.4L81.2 11.6" stroke="#8b8885"/></svg>
<svg style="left:524.4px;top:186px" width="12" height="6" fill="#8a8a8a"><path d="M0 0h11L5.5 5.2z"/></svg>
<svg style="left:998.6px;top:186px" width="12" height="6" fill="#8a8a8a"><path d="M0 0h11L5.5 5.2z"/></svg>
<svg style="position:absolute;left:7.40px;top:1240.32px;overflow:visible" width="52.00" height="32.00"><text x="0" y="24.88" font-family="'Liberation Sans','Noto Sans CJK SC',sans-serif" font-size="26" fill="#dcdcdc" textLength="52" lengthAdjust="spacing">输出</text></svg>
<svg style="left:2500px;top:1246px" width="56" height="24"><path d="M3.4 8.6h15.4l-7.7 8.8z" fill="#d8d8d8"/><path d="M34.6 5.2l13.8 13.4M48.4 5.2l-13.8 13.4" stroke="#d8d8d8" stroke-width="2.8" fill="none"/></svg>
<svg style="position:absolute;left:8.30px;top:1284.97px;overflow:visible" width="88.00" height="27.40"><text x="0" y="20.83" font-family="'Liberation Mono','Noto Serif CJK SC',monospace" font-size="21.4" fill="#dedede" textLength="88" lengthAdjust="spacing">执行模板</text></svg>
<svg style="left:96.00px;top:1284.40px;overflow:visible" width="930.0" height="31.9"><text x="0" y="22" font-family="Liberation Mono" font-size="22" fill="#dedede" textLength="924.00" lengthAdjust="spacing" style="white-space:pre"> &#x27;C:\Users\Yime\Documents\SweetScape\010 Templates\Repository\ZIP.bt&#x27; </text></svg>
<svg style="position:absolute;left:1020.30px;top:1284.97px;overflow:visible" width="22.00" height="27.40"><text x="0" y="20.83" font-family="'Liberation Mono','Noto Serif CJK SC',monospace" font-size="21.4" fill="#dedede">于</text></svg>
<svg style="left:1042.00px;top:1284.40px;overflow:visible" width="375.6" height="31.9"><text x="0" y="22" font-family="Liberation Mono" font-size="22" fill="#dedede" textLength="369.60" lengthAdjust="spacing" style="white-space:pre"> &#x27;C:\Users\Yime\Desktop\XLB\</text></svg>
<svg style="position:absolute;left:1411.90px;top:1284.97px;overflow:visible" width="88.00" height="27.40"><text x="0" y="20.83" font-family="'Liberation Mono','Noto Serif CJK SC',monospace" font-size="21.4" fill="#dedede" textLength="88" lengthAdjust="spacing">宇宙编史</text></svg>
<svg style="left:1499.60px;top:1284.40px;overflow:visible" width="111.6" height="31.9"><text x="0" y="22" font-family="Liberation Mono" font-size="22" fill="#dedede" textLength="105.60" lengthAdjust="spacing" style="white-space:pre">.zip&#x27;...</text></svg>
<svg style="position:absolute;left:8.30px;top:1314.97px;overflow:visible" width="154.00" height="27.40"><text x="0" y="20.83" font-family="'Liberation Mono','Noto Serif CJK SC',monospace" font-size="21.4" fill="#dedede" textLength="154" lengthAdjust="spacing">模板执行成功。</text></svg>
<div style="left:118px;top:1436px;width:2441px;height:4px;background:#8d8d8d;"></div>
<div style="left:0;top:1436px;width:118px;height:48px;background:#858585;border-radius:0 0 9px 9px"></div>
<svg style="position:absolute;left:54.40px;top:1446.64px;overflow:visible" width="48.20" height="30.50"><text x="0" y="23.56" font-family="'Liberation Sans','Noto Sans CJK SC',sans-serif" font-size="24.5" fill="#000" textLength="48.2" lengthAdjust="spacing">输出</text></svg>
<svg style="position:absolute;left:172.00px;top:1447.84px;overflow:visible" width="96.40" height="30.50"><text x="0" y="23.56" font-family="'Liberation Sans','Noto Sans CJK SC',sans-serif" font-size="24.5" fill="#d3d3d3" textLength="96.4" lengthAdjust="spacing">查找结果</text></svg>
<svg style="position:absolute;left:338.80px;top:1447.84px;overflow:visible" width="144.60" height="30.50"><text x="0" y="23.56" font-family="'Liberation Sans','Noto Sans CJK SC',sans-serif" font-size="24.5" fill="#d3d3d3" textLength="144.6" lengthAdjust="spacing">多文件中查找</text></svg>
<svg style="position:absolute;left:553.40px;top:1447.84px;overflow:visible" width="48.20" height="30.50"><text x="0" y="23.56" font-family="'Liberation Sans','Noto Sans CJK SC',sans-serif" font-size="24.5" fill="#d3d3d3" textLength="48.2" lengthAdjust="spacing">比较</text></svg>
<svg style="position:absolute;left:670.20px;top:1447.84px;overflow:visible" width="72.30" height="30.50"><text x="0" y="23.56" font-family="'Liberation Sans','Noto Sans CJK SC',sans-serif" font-size="24.5" fill="#d3d3d3" textLength="72.3" lengthAdjust="spacing">直方图</text></svg>
<svg style="position:absolute;left:812.00px;top:1447.84px;overflow:visible" width="72.30" height="30.50"><text x="0" y="23.56" font-family="'Liberation Sans','Noto Sans CJK SC',sans-serif" font-size="24.5" fill="#d3d3d3" textLength="72.3" lengthAdjust="spacing">校验和</text></svg>
<svg style="position:absolute;left:954.20px;top:1447.84px;overflow:visible" width="48.20" height="30.50"><text x="0" y="23.56" font-family="'Liberation Sans','Noto Sans CJK SC',sans-serif" font-size="24.5" fill="#d3d3d3" textLength="48.2" lengthAdjust="spacing">进程</text></svg>
<svg style="position:absolute;left:1072.20px;top:1447.84px;overflow:visible" width="96.40" height="30.50"><text x="0" y="23.56" font-family="'Liberation Sans','Noto Sans CJK SC',sans-serif" font-size="24.5" fill="#d3d3d3" textLength="96.4" lengthAdjust="spacing">反汇编器</text></svg>
<svg style="position:absolute;left:1569.60px;top:1493.38px;overflow:visible" width="48.40" height="30.80"><text x="0" y="23.82" font-family="'Liberation Sans','Noto Sans CJK SC',sans-serif" font-size="24.8" fill="#d6d6d6" textLength="48.4" lengthAdjust="spacing">位置</text></svg>
<svg style="left:1618.00px;top:1491.40px;overflow:visible" width="182.0" height="36.5"><text x="0" y="25.2" font-family="Liberation Sans" font-size="25.2" fill="#d6d6d6" textLength="176.00" lengthAdjust="spacingAndGlyphs" style="white-space:pre">: 25833 [64E9h]</text></svg>
<svg style="position:absolute;left:1817.20px;top:1493.38px;overflow:visible" width="24.20" height="30.80"><text x="0" y="23.82" font-family="'Liberation Sans','Noto Sans CJK SC',sans-serif" font-size="24.8" fill="#d6d6d6">值</text></svg>
<svg style="left:1841.60px;top:1491.40px;overflow:visible" width="68.5" height="36.5"><text x="0" y="25.2" font-family="Liberation Sans" font-size="25.2" fill="#d6d6d6" textLength="62.50" lengthAdjust="spacingAndGlyphs" style="white-space:pre">: 0 0h</text></svg>
<svg style="position:absolute;left:1921.60px;top:1493.38px;overflow:visible" width="48.40" height="30.80"><text x="0" y="23.82" font-family="'Liberation Sans','Noto Sans CJK SC',sans-serif" font-size="24.8" fill="#d6d6d6" textLength="48.4" lengthAdjust="spacing">大小</text></svg>
<svg style="left:1970.00px;top:1491.40px;overflow:visible" width="94.0" height="36.5"><text x="0" y="25.2" font-family="Liberation Sans" font-size="25.2" fill="#d6d6d6" textLength="88.00" lengthAdjust="spacingAndGlyphs" style="white-space:pre">: 25,965</text></svg>
<svg style="position:absolute;left:2111.60px;top:1493.38px;overflow:visible" width="96.80" height="30.80"><text x="0" y="23.82" font-family="'Liberation Sans','Noto Sans CJK SC',sans-serif" font-size="24.8" fill="#d6d6d6" textLength="96.8" lengthAdjust="spacing">十六进制</text></svg>
<svg style="left:2208.00px;top:1491.40px;overflow:visible" width="39.4" height="36.5"><text x="0" y="25.2" font-family="Liberation Sans" font-size="25.2" fill="#d6d6d6" textLength="33.40" lengthAdjust="spacingAndGlyphs" style="white-space:pre">(H)</text></svg>
<svg style="left:2260.40px;top:1491.40px;overflow:visible" width="62.0" height="36.5"><text x="0" y="25.2" font-family="Liberation Sans" font-size="25.2" fill="#d6d6d6" textLength="56.00" lengthAdjust="spacingAndGlyphs" style="white-space:pre">ANSI</text></svg>
<svg style="position:absolute;left:2335.60px;top:1493.38px;overflow:visible" width="48.40" height="30.80"><text x="0" y="23.82" font-family="'Liberation Sans','Noto Sans CJK SC',sans-serif" font-size="24.8" fill="#d6d6d6" textLength="48.4" lengthAdjust="spacing">小端</text></svg>
<svg style="position:absolute;left:2502.80px;top:1493.38px;overflow:visible" width="48.80" height="30.80"><text x="0" y="23.82" font-family="'Liberation Sans','Noto Sans CJK SC',sans-serif" font-size="24.8" fill="#d6d6d6" textLength="48.8" lengthAdjust="spacing">插入</text></svg>
<svg style="left:0;top:80px" width="1960" height="56" viewBox="0 80 1960 56"><rect x="6" y="98" width="2" height="20" fill="#5c5a57"/><path d="M32.6 90.6h16.1l8.5 8.5v24.1h-24.6z" fill="#f9faff" stroke="#93a6d1" stroke-width="1.8" stroke-linejoin="round"/><path d="M48.7 90.6v8.5h8.5" fill="none" stroke="#93a6d1" stroke-width="1.8" stroke-linejoin="round"/><path d="M77.8 102.6l8.9 9.2l8.9-9.2" fill="none" stroke="#6b6966" stroke-width="2.6"/><path d="M104.6 121V95q0-2 2-2h5.6q1.6 0 2 1.6l.9 3.2h16.4v6.4h11.6L127.4 121z" fill="#fbeeb0" stroke="#e0b84c" stroke-width="2" stroke-linejoin="round"/><path d="M105 120.6l13.4-15.2h24.4" fill="none" stroke="#e0b84c" stroke-width="2" stroke-linejoin="round"/><path d="M155.8 102.6l8.9 9.2l8.9-9.2" fill="none" stroke="#6b6966" stroke-width="2.6"/><rect x="185" y="88.8" width="34" height="36.4" rx="2.5" fill="#6faaeb" stroke="#4a84c6" stroke-width="2.0"/><rect x="190.8" y="89.8" width="22.4" height="17.1" fill="#fff"/><rect x="192.5" y="113.3" width="19.7" height="10.9" fill="#e9e9e9"/><rect x="194.9" y="115.3" width="5.4" height="7.4" fill="#6faaeb"/><path d="M253 88.8h13.899999999999999l6.5 6.5v20.1h-20.4z" fill="#f9faff" stroke="#93a6d1" stroke-width="1.6" stroke-linejoin="round"/><path d="M266.9 88.8v6.5h6.5" fill="none" stroke="#93a6d1" stroke-width="1.6" stroke-linejoin="round"/><rect x="237" y="97.2" width="24.4" height="26" rx="2.5" fill="#6faaeb" stroke="#4a84c6" stroke-width="1.8"/><rect x="241.1" y="98.2" width="16.1" height="12.2" fill="#fff"/><rect x="242.4" y="114.4" width="14.2" height="7.8" fill="#e9e9e9"/><rect x="244.1" y="116.4" width="3.9" height="4.3" fill="#6faaeb"/><rect x="303" y="90.6" width="24.4" height="26" rx="2.5" fill="#6faaeb" stroke="#4a84c6" stroke-width="1.8"/><rect x="306.6" y="92" width="17" height="16" fill="#fff"/><rect x="297" y="94.6" width="24.4" height="26" rx="2.5" fill="#6faaeb" stroke="#4a84c6" stroke-width="1.8"/><rect x="300.6" y="96" width="17" height="16" fill="#fff"/><rect x="291" y="98.8" width="24.4" height="26" rx="2.5" fill="#6faaeb" stroke="#4a84c6" stroke-width="1.8"/><rect x="295.1" y="99.8" width="16.1" height="12.2" fill="#fff"/><rect x="296.4" y="116.0" width="14.2" height="7.8" fill="#e9e9e9"/><rect x="298.1" y="118.0" width="3.9" height="4.3" fill="#6faaeb"/><path d="M351 121.39999999999999V94.6l2-2h5.7l2 2v2.2H377.6V121.39999999999999z" fill="#fbeeb0" stroke="#e0b84c" stroke-width="2.0" stroke-linejoin="miter"/><rect x="355.1" y="101.0" width="24.5" height="20.4" fill="#fbeeb0" stroke="#e0b84c" stroke-width="2.0"/><path d="M414.6 111.4V90.8l2-2h4.6l2 2v1.3H435.4V111.4z" fill="#fbeeb0" stroke="#e0b84c" stroke-width="1.8" stroke-linejoin="miter"/><rect x="417.9" y="95.4" width="19.5" height="16.0" fill="#fbeeb0" stroke="#e0b84c" stroke-width="1.8"/><path d="M406.8 119.4V98.8l2-2h4.6l2 2v1.3H427.6V119.4z" fill="#fbeeb0" stroke="#e0b84c" stroke-width="1.8" stroke-linejoin="miter"/><rect x="410.1" y="103.4" width="19.5" height="16.0" fill="#fbeeb0" stroke="#e0b84c" stroke-width="1.8"/><path d="M398.8 127.19999999999999V106.8l2-2h4.6l2 2v1.3H419.6V127.19999999999999z" fill="#fbeeb0" stroke="#e0b84c" stroke-width="1.8" stroke-linejoin="miter"/><rect x="402.1" y="111.3" width="19.5" height="15.9" fill="#fbeeb0" stroke="#e0b84c" stroke-width="1.8"/><rect x="456" y="98" width="2" height="20" fill="#5c5a57"/><g fill="none" stroke="#a9a7a3" stroke-width="3.6"><circle cx="490.8" cy="117.8" r="5"/><circle cx="503.2" cy="110.8" r="5"/></g><g fill="#e3e1dd" stroke="#a9a7a3" stroke-width="1.7" stroke-linejoin="round"><path d="M480.2 94.8l4.4-1.6l14.2 13.6l-3 5.2l-14.6-12.2z"/><path d="M491.2 91.4l2.4-3.4l4.2 5.4l-.2 15.4l-4.6 4.4l-1.6-8z"/></g><path d="M532.6 91.2h14.399999999999999l6 6v20.2h-20.4z" fill="#e3e1dd" stroke="#b3b1ad" stroke-width="1.8" stroke-linejoin="round"/><path d="M547.0 91.2v6h6" fill="none" stroke="#b3b1ad" stroke-width="1.8" stroke-linejoin="round"/><path d="M545 98.6h14.399999999999999l6 6v20.2h-20.4z" fill="#e3e1dd" stroke="#b3b1ad" stroke-width="1.8" stroke-linejoin="round"/><path d="M559.4 98.6v6h6" fill="none" stroke="#b3b1ad" stroke-width="1.8" stroke-linejoin="round"/><rect x="587.2" y="91.4" width="32.4" height="32" rx="2.5" fill="#fbeeb0" stroke="#e0b84c" stroke-width="2"/><path d="M595.2 95l3.6-6.2h8.6l3.6 6.2z" fill="#fff" stroke="#93a6d1" stroke-width="1.8" stroke-linejoin="round"/><path d="M602.8 103.6h12.600000000000001l6 6v15.2h-18.6z" fill="#f9faff" stroke="#93a6d1" stroke-width="1.6" stroke-linejoin="round"/><path d="M615.4 103.6v6h6" fill="none" stroke="#93a6d1" stroke-width="1.6" stroke-linejoin="round"/><g><path d="M643.1999999999999 94.6v14.8h15.6" fill="none" stroke="#4a84c6" stroke-width="5.8" stroke-linejoin="round" stroke-linecap="round"/><path d="M646.5999999999999 108.6C647.4 98.6 654.4 93 661.4 93.2C669.1999999999999 93.6 674.4 100 672.8 107.4C671.8 111.6 667.1999999999999 115.6 661.8 120.4" fill="none" stroke="#4a84c6" stroke-width="5.8" stroke-linecap="round"/><path d="M643.1999999999999 94.6v14.8h15.6" fill="none" stroke="#6faaeb" stroke-width="3.2" stroke-linejoin="round" stroke-linecap="round"/><path d="M646.5999999999999 108.6C647.4 98.6 654.4 93 661.4 93.2C669.1999999999999 93.6 674.4 100 672.8 107.4C671.8 111.6 667.1999999999999 115.6 661.8 120.4" fill="none" stroke="#6faaeb" stroke-width="3.2" stroke-linecap="round"/></g><g transform="translate(1423.2,0) scale(-1,1)"><path d="M697.3 94.6v14.8h15.6" fill="none" stroke="#8f8d89" stroke-width="5.8" stroke-linejoin="round" stroke-linecap="round"/><path d="M700.6999999999999 108.6C701.5 98.6 708.5 93 715.5 93.2C723.3 93.6 728.5 100 726.9 107.4C725.9 111.6 721.3 115.6 715.9 120.4" fill="none" stroke="#8f8d89" stroke-width="5.8" stroke-linecap="round"/><path d="M697.3 94.6v14.8h15.6" fill="none" stroke="#aaa8a4" stroke-width="3.2" stroke-linejoin="round" stroke-linecap="round"/><path d="M700.6999999999999 108.6C701.5 98.6 708.5 93 715.5 93.2C723.3 93.6 728.5 100 726.9 107.4C725.9 111.6 721.3 115.6 715.9 120.4" fill="none" stroke="#aaa8a4" stroke-width="3.2" stroke-linecap="round"/></g><rect x="750" y="98" width="2" height="20" fill="#5c5a57"/><path d="M789.0 110.2L773.6 124.4" stroke="#e0b84c" stroke-width="7.6" stroke-linecap="round"/><path d="M789.0 110.2L773.6 124.4" stroke="#fbeeb0" stroke-width="4.2" stroke-linecap="round"/><circle cx="796.6" cy="101.4" r="12.6" fill="#fdfdff" stroke="#93a6d1" stroke-width="2"/><text x="844.2" y="115.4" font-family="Liberation Sans" font-weight="bold" font-size="30.5" fill="#5a90cc" textLength="19.6" lengthAdjust="spacingAndGlyphs">B</text><text x="824.6" y="125.8" font-family="Liberation Sans" font-size="30" fill="#6faaeb" stroke="#6faaeb" stroke-width="0.5" textLength="23" lengthAdjust="spacingAndGlyphs">A</text><path d="M828.8 95.2h9.6v-6l8.8 8.2l-8.8 8.2v-4.4h-9.6z" fill="#fbeeb0" stroke="#e0b84c" stroke-width="1.8" stroke-linejoin="round"/><path d="M878.8 114V93q0-2 2-2h5.6q1.6 0 2 1.6l.9 3.2h16v5h7.6L898 114z" fill="#fbeeb0" stroke="#e0b84c" stroke-width="2" stroke-linejoin="round"/><path d="M879.4 113.6l11-12.2h22" fill="none" stroke="#e0b84c" stroke-width="2"/><path d="M900.4 114.6L890.4 124.8" stroke="#e0b84c" stroke-width="7.6" stroke-linecap="round"/><path d="M900.4 114.6L890.4 124.8" stroke="#fbeeb0" stroke-width="4.2" stroke-linecap="round"/><circle cx="905.6" cy="108.6" r="8.6" fill="#fdfdff" stroke="#93a6d1" stroke-width="2"/><path d="M938 108h22M951 95l13.2 13l-13.2 13" fill="none" stroke="#4a84c6" stroke-width="7.8" stroke-linecap="round" stroke-linejoin="round"/><path d="M938 108h22M951 95l13.2 13l-13.2 13" fill="none" stroke="#6faaeb" stroke-width="4.8" stroke-linecap="round" stroke-linejoin="round"/><rect x="990" y="98" width="2" height="20" fill="#5c5a57"/><path d="M1019.8 93.6q-.6 13 2.8 28q12.6 2 25.4-2.4q-1.4-13 -2.6-25.6z" fill="#f9faff" stroke="#93a6d1" stroke-width="2" stroke-linejoin="round"/><rect x="1019" y="88.8" width="30.4" height="6.2" rx="3.1" fill="#f9faff" stroke="#93a6d1" stroke-width="2"/><path d="M1014 98.6l15.6 14.2l-15.6 14.6z" fill="#6faaeb" stroke="#4a84c6" stroke-width="1.6" stroke-linejoin="round"/><path d="M1042 124.4h8.4l-4.2 3.8z" fill="#77746f"/><path d="M1073.8 93.6q-.6 13 2.8 28q12.6 2 25.4-2.4q-1.4-13 -2.6-25.6z" fill="#fbeeb0" stroke="#e0b84c" stroke-width="2" stroke-linejoin="round"/><rect x="1073" y="88.8" width="30.4" height="6.2" rx="3.1" fill="#fbeeb0" stroke="#e0b84c" stroke-width="2"/><path d="M1068 98.6l15.6 14.2l-15.6 14.6z" fill="#6faaeb" stroke="#4a84c6" stroke-width="1.6" stroke-linejoin="round"/><g fill="#dfb650"><circle cx="1081" cy="100.8" r="2.7"/><circle cx="1093" cy="107" r="2.7"/><circle cx="1094.6" cy="114.8" r="2.7"/><rect x="1084" y="106" width="2" height="2"/><rect x="1088" y="106" width="2" height="2"/><rect x="1084" y="113.6" width="2" height="2"/><rect x="1088" y="113.6" width="2" height="2"/></g><path d="M1096 124.4h8.4l-4.2 3.8z" fill="#77746f"/><rect x="1122" y="98" width="2" height="20" fill="#5c5a57"/><rect x="1137" y="83.2" width="52" height="50" fill="#2b2a28" stroke="#6b6a66" stroke-width="2"/><g fill="none" stroke="#5b9ce2" stroke-width="1.9"><path d="M1146.8 102.2v13.6M1155.8 102.2v13.6M1146.8 109h9"/><path d="M1162.4 111h9q0-4.8 -4.5-4.8t-4.5 4.8q0 4.6 4.7 4.6q2.8 0 4.1-1.4"/><path d="M1175.4 106.4l8.2 9.4M1183.6 106.4l-8.2 9.4"/></g><g fill="#b3b1ad"><rect x="1198.1" y="89.65" width="31.6" height="2.2"/><rect x="1198.1" y="93.70" width="19.4" height="2.2"/><rect x="1198.1" y="97.75" width="15.8" height="2.2"/><rect x="1198.1" y="101.80" width="15.8" height="2.2"/><rect x="1198.1" y="105.85" width="17.6" height="2.2"/><rect x="1198.1" y="109.90" width="31.6" height="2.2"/><rect x="1198.1" y="113.95" width="19.4" height="2.2"/><rect x="1198.1" y="118.00" width="15.8" height="2.2"/><rect x="1198.1" y="122.05" width="15.8" height="2.2"/><path d="M1229.6 92.4h3.8v9.6h-9.8v3.8l-7.2-5.6l7.2-5.6v3.8h6z"/><path d="M1229.6 113.0h3.8v9.6h-9.8v3.8l-7.2-5.6l7.2-5.6v3.8h6z"/></g><g fill="#b3b1ad"><path d="M1266.4 94.2h-2.4a8 8 0 0 0 0 16h2.4z"/><rect x="1265.6" y="94.2" width="2.5" height="27.8"/><rect x="1272.9" y="94.2" width="2.5" height="27.8"/><rect x="1264" y="94.2" width="16.4" height="2.3"/></g><g fill="#6faaeb"><rect x="1308" y="93.6" width="14" height="2.2"/><rect x="1326" y="93.6" width="14" height="2.2"/><rect x="1308" y="97.6" width="14" height="2.2"/><rect x="1326" y="97.6" width="14" height="2.2"/><rect x="1308" y="101.6" width="14" height="2.2"/><rect x="1326" y="101.6" width="14" height="2.2"/><rect x="1308" y="105.6" width="14" height="2.2"/><rect x="1326" y="105.6" width="14" height="2.2"/><rect x="1308" y="109.6" width="14" height="2.2"/><rect x="1326" y="109.6" width="14" height="2.2"/><rect x="1308" y="113.6" width="14" height="2.2"/><rect x="1326" y="113.6" width="14" height="2.2"/><rect x="1308" y="117.6" width="14" height="2.2"/><rect x="1326" y="117.6" width="14" height="2.2"/><rect x="1308" y="121.6" width="14" height="2.2"/><rect x="1326" y="121.6" width="14" height="2.2"/></g><path d="M1372 118l8.2-8.8l13.2 9.4v3h-18.2z" fill="#fbeeb0" stroke="#e0b84c" stroke-width="1.8" stroke-linejoin="round"/><path d="M1358.8 88.8h9.6l15 15.2l-14.6 15.4l-10-8.8z" fill="#f9faff" stroke="#93a6d1" stroke-width="1.8" stroke-linejoin="round"/><path d="M1389.6 124.4h8.4l-4.2 3.8z" fill="#77746f"/><rect x="1416" y="98" width="2" height="20" fill="#5c5a57"/><rect x="1441.2" y="91.2" width="28" height="33.6" rx="2.5" fill="#6faaeb" stroke="#4a84c6" stroke-width="2"/><rect x="1444.2" y="94" width="22" height="6.2" fill="#fff"/><rect x="1444.4" y="104.6" width="4" height="4" fill="#fbeeb0"/><rect x="1450.6" y="104.6" width="4" height="4" fill="#fbeeb0"/><rect x="1456.8" y="104.6" width="4" height="4" fill="#fbeeb0"/><rect x="1463.0" y="104.6" width="4" height="4" fill="#fbeeb0"/><rect x="1444.4" y="110.8" width="4" height="4" fill="#fbeeb0"/><rect x="1450.6" y="110.8" width="4" height="4" fill="#fbeeb0"/><rect x="1456.8" y="110.8" width="4" height="4" fill="#fbeeb0"/><rect x="1463.0" y="110.8" width="4" height="4" fill="#fbeeb0"/><rect x="1444.4" y="117.0" width="4" height="4" fill="#fbeeb0"/><rect x="1450.6" y="117.0" width="4" height="4" fill="#fbeeb0"/><rect x="1456.8" y="117.0" width="4" height="4" fill="#fbeeb0"/><rect x="1463.0" y="117.0" width="4" height="4" fill="#e6cf8c"/><path d="M1505 88.8h13.5l6.5 6.5v19.5h-20z" fill="#f9faff" stroke="#93a6d1" stroke-width="1.6" stroke-linejoin="round"/><path d="M1518.5 88.8v6.5h6.5" fill="none" stroke="#93a6d1" stroke-width="1.6" stroke-linejoin="round"/><path d="M1495 95.2h13.5l6.5 6.5v19.5h-20z" fill="#f9faff" stroke="#93a6d1" stroke-width="1.6" stroke-linejoin="round"/><path d="M1508.5 95.2v6.5h6.5" fill="none" stroke="#93a6d1" stroke-width="1.6" stroke-linejoin="round"/><text x="1499.6" y="126.6" font-family="Liberation Sans" font-weight="bold" font-size="36" fill="#fbeeb0" stroke="#e0b84c" stroke-width="1.8" textLength="22" lengthAdjust="spacingAndGlyphs">?</text><path d="M1546.8 100.6h21.8v-10l13 13.4l-13 13.6v-9.6h-21.8z" fill="#fbeeb0" stroke="#e0b84c" stroke-width="1.8" stroke-linejoin="round"/><path d="M1546.6 111.8l12.8-13.4v9.8h22v7.8h-22v9.6z" fill="#6faaeb" stroke="#4a84c6" stroke-width="1.7" stroke-linejoin="round"/><clipPath id="cpx"><rect x="1561.4" y="84" width="26" height="46"/></clipPath><g clip-path="url(#cpx)"><path d="M1546.8 100.6h21.8v-10l13 13.4l-13 13.6v-9.6h-21.8z" fill="#fbeeb0" stroke="#e0b84c" stroke-width="1.8" stroke-linejoin="round"/></g><rect x="1604.0" y="118.6" width="2.2" height="3" fill="#6faaeb"/><rect x="1606.2" y="116.6" width="2.2" height="5" fill="#4a84c6"/><rect x="1608.4" y="113.6" width="2.2" height="8" fill="#6faaeb"/><rect x="1610.6" y="109.6" width="2.2" height="12" fill="#4a84c6"/><rect x="1612.8" y="104.6" width="2.2" height="17" fill="#6faaeb"/><rect x="1615.0" y="97.6" width="2.2" height="24" fill="#4a84c6"/><rect x="1617.2" y="103.6" width="2.2" height="18" fill="#6faaeb"/><rect x="1619.4" y="109.6" width="2.2" height="12" fill="#4a84c6"/><rect x="1621.6" y="113.6" width="2.2" height="8" fill="#6faaeb"/><rect x="1623.8" y="116.6" width="2.2" height="5" fill="#4a84c6"/><rect x="1626.0" y="114.6" width="2.2" height="7" fill="#6faaeb"/><rect x="1628.2" y="110.6" width="2.2" height="11" fill="#4a84c6"/><rect x="1630.4" y="113.6" width="2.2" height="8" fill="#6faaeb"/><rect x="1632.6" y="116.6" width="2.2" height="5" fill="#4a84c6"/><rect x="1634.8" y="118.6" width="2.2" height="3" fill="#6faaeb"/><path d="M1600.6 88v37.2h37.2" fill="none" stroke="#e0b84c" stroke-width="5.6"/><path d="M1600.6 89v36.2h36.2" fill="none" stroke="#fbeeb0" stroke-width="2.2"/><g fill="#6faaeb"><rect x="1654" y="96" width="18.2" height="6"/><rect x="1660" y="90" width="6.1" height="18.1"/><rect x="1672.2" y="114.2" width="15.8" height="5.6"/><path d="M1680.6 96l3.6 3.4L1661.6 122.4l-3.6-3.4z"/></g><path d="M1683.8 124.4h8.4l-4.2 3.8z" fill="#77746f"/><path d="M1721 94.8h22.2v8.4h-5.2v-2.6h-7l6.2 7.8l-6.2 8.4h7v-2.6h5.2v8.6H1721v-5.2l8.8-9.2l-8.8-8.6z" fill="#6faaeb" stroke="#4a84c6" stroke-width="1.6" stroke-linejoin="round"/><path d="M1709.2 104.8l4.6-4.2l5.6 6l14-13.6l4.2 4.2l-18.4 18.2z" fill="#fbeeb0" stroke="#e0b84c" stroke-width="1.8" stroke-linejoin="round"/><text x="1758.6" y="113.8" font-family="Liberation Mono" font-weight="bold" font-size="21.5" fill="#5b92d0" textLength="41.4" lengthAdjust="spacingAndGlyphs">mov</text><g fill="#6faaeb"><path d="M1832.4 90q-14.4 0 -14.4 12.2h-4.4l8.6 9.8l8.6-9.8h-4.6q0-3.8 6.2-3.8z"/><path d="M1835.6 125.8q14.6 0 14.6-12.4h4.4l-8.6-9.8l-8.6 9.8h4.6q0 4 -6.4 4z"/></g><text x="1833.6" y="101.4" font-family="Liberation Sans" font-size="17.6" fill="#5b92d0" textLength="21" lengthAdjust="spacingAndGlyphs">10</text><text x="1813.4" y="128" font-family="Liberation Sans" font-size="17.6" fill="#5b92d0" textLength="20.6" lengthAdjust="spacingAndGlyphs">16</text><rect x="1872" y="98" width="2" height="20" fill="#5c5a57"/><rect x="1904" y="100.2" width="7.6" height="18" fill="#a9a7a2"/><rect x="1914.4" y="100.2" width="7.6" height="18" fill="#a9a7a2"/></svg>
<div style="left:2468px;top:186px;width:2px;height:1044px;background:#3a3a39;"></div>
<div style="left:2470px;top:186px;width:64px;height:1004px;background:#494947;"></div>
<svg style="left:2470px;top:186px" width="64" height="1004" shape-rendering="crispEdges"><defs><pattern id="nz" width="64" height="200" patternUnits="userSpaceOnUse"><rect width="64" height="200" fill="#494947"/><path fill="#373736" d="M24 0h4v4h-4zM32 0h4v4h-4zM20 4h4v4h-4zM8 8h4v4h-4zM32 12h4v4h-4zM24 16h4v4h-4zM56 16h4v4h-4zM8 20h4v4h-4zM40 24h4v4h-4zM12 28h4v4h-4zM4 32h8v4h-8zM24 32h4v4h-4zM32 36h4v4h-4zM52 36h4v4h-4zM12 44h8v4h-8zM12 56h4v4h-4zM52 60h4v4h-4zM0 64h4v4h-4zM60 76h4v4h-4zM8 80h4v4h-4zM48 80h4v4h-4zM36 84h4v4h-4zM56 88h4v4h-4zM28 92h4v4h-4zM36 92h4v4h-4zM56 96h4v4h-4zM24 104h4v4h-4zM48 104h4v4h-4zM0 108h8v4h-8zM0 112h4v4h-4zM4 116h4v4h-4zM44 116h4v4h-4zM28 124h8v4h-8zM24 128h4v4h-4zM44 132h8v4h-8zM16 136h4v4h-4zM12 140h4v4h-4zM20 144h4v4h-4zM44 144h4v4h-4zM60 156h4v4h-4zM0 160h4v4h-4zM20 160h4v4h-4zM24 164h4v4h-4zM28 168h4v4h-4zM12 172h4v4h-4zM44 172h4v4h-4zM28 180h8v4h-8zM12 184h4v4h-4zM36 184h4v4h-4zM16 188h4v4h-4zM44 188h4v4h-4zM60 188h4v4h-4zM0 192h4v4h-4zM56 192h4v4h-4zM12 196h4v4h-4z"/><path fill="#3d3d3c" d="M4 0h4v4h-4zM12 0h4v4h-4zM40 0h8v4h-8zM56 0h4v4h-4zM32 4h8v4h-8zM48 4h4v4h-4zM4 8h4v4h-4zM12 12h4v4h-4zM24 12h4v4h-4zM0 20h8v4h-8zM16 20h4v4h-4zM32 20h4v4h-4zM12 24h8v4h-8zM40 28h4v4h-4zM48 28h8v4h-8zM60 28h4v4h-4zM12 32h8v4h-8zM36 32h4v4h-4zM52 32h4v4h-4zM8 36h8v4h-8zM28 36h4v4h-4zM44 36h4v4h-4zM16 40h4v4h-4zM0 48h4v4h-4zM32 48h4v4h-4zM56 48h4v4h-4zM28 52h12v4h-12zM48 52h4v4h-4zM8 56h4v4h-4zM8 60h4v4h-4zM60 60h4v4h-4zM8 64h4v4h-4zM40 64h4v4h-4zM12 72h8v4h-8zM24 72h4v4h-4zM32 72h4v4h-4zM48 72h4v4h-4zM60 72h4v4h-4zM32 76h4v4h-4zM48 76h4v4h-4zM24 80h4v4h-4zM40 80h4v4h-4zM60 80h4v4h-4zM16 84h4v4h-4zM32 84h4v4h-4zM48 84h4v4h-4zM0 88h4v4h-4zM8 88h4v4h-4zM36 88h4v4h-4zM48 88h8v4h-8zM60 88h4v4h-4zM20 92h4v4h-4zM48 92h4v4h-4zM60 92h4v4h-4zM60 96h4v4h-4zM0 100h4v4h-4zM12 100h8v4h-8zM48 100h4v4h-4zM40 104h4v4h-4zM56 104h4v4h-4zM52 108h4v4h-4zM24 112h4v4h-4zM8 116h4v4h-4zM16 116h4v4h-4zM4 120h4v4h-4zM16 120h4v4h-4zM4 124h8v4h-8zM4 128h4v4h-4zM12 128h4v4h-4zM0 132h4v4h-4zM12 132h4v4h-4zM0 136h4v4h-4zM28 136h4v4h-4zM16 140h4v4h-4zM44 140h4v4h-4zM52 144h4v4h-4zM32 148h8v4h-8zM4 152h12v4h-12zM20 152h4v4h-4zM0 156h4v4h-4zM12 156h4v4h-4zM48 160h8v4h-8zM48 164h4v4h-4zM0 168h8v4h-8zM60 172h4v4h-4zM52 176h4v4h-4zM8 180h4v4h-4zM24 180h4v4h-4zM0 184h4v4h-4zM32 184h4v4h-4zM52 184h4v4h-4zM32 188h4v4h-4zM4 192h4v4h-4zM52 196h4v4h-4z"/><path fill="#434342" d="M0 0h4v4h-4zM20 0h4v4h-4zM48 0h4v4h-4zM60 0h4v4h-4zM12 4h4v4h-4zM28 4h4v4h-4zM40 4h4v4h-4zM60 4h4v4h-4zM12 8h4v4h-4zM20 8h8v4h-8zM36 8h4v4h-4zM48 8h4v4h-4zM4 12h4v4h-4zM16 12h4v4h-4zM52 12h4v4h-4zM44 16h8v4h-8zM20 20h8v4h-8zM56 20h8v4h-8zM0 24h4v4h-4zM20 24h8v4h-8zM36 24h4v4h-4zM44 24h8v4h-8zM32 28h8v4h-8zM56 28h4v4h-4zM0 32h4v4h-4zM20 32h4v4h-4zM40 32h12v4h-12zM16 36h8v4h-8zM8 40h8v4h-8zM32 40h8v4h-8zM0 44h4v4h-4zM8 44h4v4h-4zM20 44h8v4h-8zM52 44h12v4h-12zM4 48h4v4h-4zM0 52h4v4h-4zM12 52h8v4h-8zM0 56h4v4h-4zM44 56h16v4h-16zM0 60h8v4h-8zM16 60h4v4h-4zM32 60h4v4h-4zM24 64h4v4h-4zM48 64h8v4h-8zM60 68h4v4h-4zM28 72h4v4h-4zM8 76h4v4h-4zM16 76h4v4h-4zM44 76h4v4h-4zM52 76h4v4h-4zM12 80h4v4h-4zM44 80h4v4h-4zM56 80h4v4h-4zM0 84h4v4h-4zM12 84h4v4h-4zM44 84h4v4h-4zM20 88h4v4h-4zM32 88h4v4h-4zM44 88h4v4h-4zM0 92h8v4h-8zM12 92h4v4h-4zM24 92h4v4h-4zM32 92h4v4h-4zM16 96h4v4h-4zM32 96h4v4h-4zM48 96h8v4h-8zM8 100h4v4h-4zM32 100h12v4h-12zM56 100h4v4h-4zM8 104h4v4h-4zM16 104h8v4h-8zM28 104h4v4h-4zM52 104h4v4h-4zM60 104h4v4h-4zM8 108h8v4h-8zM40 108h8v4h-8zM0 116h4v4h-4zM12 116h4v4h-4zM12 120h4v4h-4zM20 120h4v4h-4zM28 120h4v4h-4zM44 120h4v4h-4zM12 124h4v4h-4zM20 124h4v4h-4zM36 124h4v4h-4zM52 124h4v4h-4zM44 128h8v4h-8zM56 128h4v4h-4zM32 132h4v4h-4zM60 132h4v4h-4zM4 136h8v4h-8zM44 136h12v4h-12zM0 140h12v4h-12zM24 140h4v4h-4zM32 140h8v4h-8zM48 140h4v4h-4zM40 144h4v4h-4zM60 144h4v4h-4zM0 148h4v4h-4zM12 148h4v4h-4zM20 148h4v4h-4zM28 148h4v4h-4zM40 148h4v4h-4zM52 148h4v4h-4zM16 152h4v4h-4zM24 152h8v4h-8zM44 152h8v4h-8zM56 152h8v4h-8zM4 156h4v4h-4zM28 156h16v4h-16zM24 160h4v4h-4zM44 160h4v4h-4zM32 164h4v4h-4zM44 164h4v4h-4zM52 164h4v4h-4zM16 168h8v4h-8zM32 168h4v4h-4zM56 168h8v4h-8zM8 172h4v4h-4zM24 172h8v4h-8zM40 172h4v4h-4zM48 172h8v4h-8zM12 176h4v4h-4zM20 176h4v4h-4zM28 176h8v4h-8zM40 176h4v4h-4zM56 176h8v4h-8zM12 180h8v4h-8zM36 180h4v4h-4zM60 180h4v4h-4zM20 184h12v4h-12zM40 184h8v4h-8zM60 184h4v4h-4zM0 188h4v4h-4zM24 188h4v4h-4zM36 188h4v4h-4zM48 188h4v4h-4zM12 192h4v4h-4zM24 192h8v4h-8zM40 192h4v4h-4zM48 192h8v4h-8zM16 196h4v4h-4zM32 196h8v4h-8z"/><path fill="#4f4f4d" d="M52 0h4v4h-4zM44 4h4v4h-4zM16 8h4v4h-4zM40 8h8v4h-8zM0 12h4v4h-4zM20 12h4v4h-4zM40 12h4v4h-4zM56 12h4v4h-4zM8 16h4v4h-4zM28 16h4v4h-4zM40 16h4v4h-4zM12 20h4v4h-4zM48 20h4v4h-4zM60 24h4v4h-4zM8 28h4v4h-4zM20 28h4v4h-4zM28 28h4v4h-4zM56 32h4v4h-4zM24 36h4v4h-4zM4 40h4v4h-4zM20 40h4v4h-4zM28 40h4v4h-4zM40 40h4v4h-4zM48 40h16v4h-16zM28 44h4v4h-4zM16 48h4v4h-4zM28 48h4v4h-4zM44 48h8v4h-8zM60 48h4v4h-4zM4 52h4v4h-4zM24 52h4v4h-4zM44 52h4v4h-4zM52 52h4v4h-4zM40 56h4v4h-4zM4 64h4v4h-4zM16 64h4v4h-4zM36 64h4v4h-4zM56 64h4v4h-4zM4 68h4v4h-4zM28 68h4v4h-4zM48 68h4v4h-4zM8 72h4v4h-4zM40 72h4v4h-4zM52 72h4v4h-4zM28 76h4v4h-4zM56 76h4v4h-4zM32 80h4v4h-4zM52 80h4v4h-4zM8 84h4v4h-4zM28 84h4v4h-4zM40 84h4v4h-4zM60 84h4v4h-4zM4 88h4v4h-4zM8 92h4v4h-4zM40 92h4v4h-4zM0 96h4v4h-4zM12 96h4v4h-4zM24 96h4v4h-4zM36 96h8v4h-8zM4 100h4v4h-4zM20 100h4v4h-4zM24 108h4v4h-4zM32 108h4v4h-4zM56 108h4v4h-4zM4 112h4v4h-4zM16 112h8v4h-8zM36 112h12v4h-12zM56 112h8v4h-8zM20 116h4v4h-4zM36 116h4v4h-4zM48 116h8v4h-8zM8 120h4v4h-4zM24 120h4v4h-4zM32 120h4v4h-4zM52 120h8v4h-8zM16 124h4v4h-4zM44 124h8v4h-8zM32 128h4v4h-4zM16 132h4v4h-4zM28 132h4v4h-4zM12 136h4v4h-4zM20 136h8v4h-8zM36 136h4v4h-4zM20 140h4v4h-4zM60 140h4v4h-4zM16 144h4v4h-4zM24 144h4v4h-4zM32 144h4v4h-4zM4 148h4v4h-4zM40 152h4v4h-4zM52 156h4v4h-4zM4 160h4v4h-4zM32 160h8v4h-8zM60 160h4v4h-4zM4 164h4v4h-4zM12 164h4v4h-4zM28 164h4v4h-4zM60 164h4v4h-4zM4 172h4v4h-4zM20 172h4v4h-4zM56 172h4v4h-4zM0 176h8v4h-8zM24 176h4v4h-4zM36 176h4v4h-4zM48 180h4v4h-4zM8 184h4v4h-4zM4 188h8v4h-8zM52 188h8v4h-8zM16 192h4v4h-4zM44 192h4v4h-4zM60 192h4v4h-4zM56 196h8v4h-8z"/><path fill="#555553" d="M4 4h4v4h-4zM24 4h4v4h-4zM60 8h4v4h-4zM48 12h4v4h-4zM12 16h4v4h-4zM28 20h4v4h-4zM44 20h4v4h-4zM52 20h4v4h-4zM4 24h8v4h-8zM56 24h4v4h-4zM16 28h4v4h-4zM24 28h4v4h-4zM28 32h4v4h-4zM36 36h4v4h-4zM0 40h4v4h-4zM32 44h4v4h-4zM40 44h4v4h-4zM48 44h4v4h-4zM12 48h4v4h-4zM40 48h4v4h-4zM20 52h4v4h-4zM40 52h4v4h-4zM28 56h4v4h-4zM36 56h4v4h-4zM12 60h4v4h-4zM28 60h4v4h-4zM36 60h4v4h-4zM8 68h4v4h-4zM44 68h4v4h-4zM52 68h8v4h-8zM4 72h4v4h-4zM44 72h4v4h-4zM0 76h4v4h-4zM12 76h4v4h-4zM4 84h4v4h-4zM20 84h4v4h-4zM52 84h4v4h-4zM12 88h4v4h-4zM28 88h4v4h-4zM56 92h4v4h-4zM24 100h4v4h-4zM36 108h4v4h-4zM8 112h4v4h-4zM52 112h4v4h-4zM8 128h4v4h-4zM20 128h4v4h-4zM52 128h4v4h-4zM8 132h4v4h-4zM24 132h4v4h-4zM36 132h4v4h-4zM32 136h4v4h-4zM40 136h4v4h-4zM28 140h4v4h-4zM52 140h8v4h-8zM4 144h8v4h-8zM48 144h4v4h-4zM44 148h4v4h-4zM56 148h4v4h-4zM36 152h4v4h-4zM24 156h4v4h-4zM48 156h4v4h-4zM56 156h4v4h-4zM8 160h4v4h-4zM28 160h4v4h-4zM0 164h4v4h-4zM36 164h4v4h-4zM40 168h4v4h-4zM48 168h4v4h-4zM36 172h4v4h-4zM44 176h4v4h-4zM4 180h4v4h-4zM40 180h8v4h-8zM56 180h4v4h-4zM4 184h4v4h-4zM48 184h4v4h-4zM28 188h4v4h-4zM40 188h4v4h-4zM8 192h4v4h-4zM20 192h4v4h-4zM32 192h4v4h-4zM0 196h4v4h-4zM8 196h4v4h-4zM24 196h8v4h-8zM48 196h4v4h-4z"/><path fill="#5b5b58" d="M16 4h4v4h-4zM8 12h4v4h-4zM36 16h4v4h-4zM60 32h4v4h-4zM60 36h4v4h-4zM44 40h4v4h-4zM44 44h4v4h-4zM8 52h4v4h-4zM56 52h4v4h-4zM16 56h4v4h-4zM4 76h4v4h-4zM24 76h4v4h-4zM28 80h4v4h-4zM36 80h4v4h-4zM28 96h4v4h-4zM60 100h4v4h-4zM0 104h4v4h-4zM12 104h4v4h-4zM48 108h4v4h-4zM36 120h4v4h-4zM16 128h4v4h-4zM36 128h4v4h-4zM56 136h4v4h-4zM8 148h4v4h-4zM60 148h4v4h-4zM8 156h4v4h-4zM40 160h4v4h-4zM0 172h4v4h-4zM16 176h4v4h-4zM20 180h4v4h-4zM52 180h4v4h-4zM56 184h4v4h-4z"/></pattern></defs><rect width="64" height="1004" fill="url(#nz)"/></svg>
<div style="left:2470px;top:1190px;width:4px;height:4px;background:#5a4c55;"></div>
<div style="left:2474px;top:1190px;width:4px;height:4px;background:#564a55;"></div>
<div style="left:2478px;top:1190px;width:4px;height:4px;background:#5c4b50;"></div>
<div style="left:2482px;top:1190px;width:4px;height:4px;background:#5c4b50;"></div>
<div style="left:2486px;top:1190px;width:4px;height:4px;background:#5a4a52;"></div>
<div style="left:2490px;top:1190px;width:4px;height:4px;background:#5c4b50;"></div>
<div style="left:2494px;top:1190px;width:4px;height:4px;background:#574950;"></div>
<div style="left:2498px;top:1190px;width:4px;height:4px;background:#564a55;"></div>
<div style="left:2502px;top:1190px;width:4px;height:4px;background:#574a55;"></div>
<div style="left:2506px;top:1190px;width:4px;height:4px;background:#5a4c55;"></div>
<div style="left:2510px;top:1190px;width:4px;height:4px;background:#564a55;"></div>
<div style="left:2514px;top:1190px;width:4px;height:4px;background:#574a55;"></div>
<div style="left:2518px;top:1190px;width:4px;height:4px;background:#574950;"></div>
<div style="left:2522px;top:1190px;width:4px;height:4px;background:#594a52;"></div>
<div style="left:2526px;top:1190px;width:4px;height:4px;background:#5a4a52;"></div>
<div style="left:2530px;top:1190px;width:4px;height:4px;background:#5c4b50;"></div>
<svg style="left:2470px;top:1194px" width="64" height="32" shape-rendering="crispEdges"><rect x="0" y="0" width="4" height="4" fill="#d48b3f"/><rect x="4" y="0" width="4" height="4" fill="#7f5224"/><rect x="8" y="0" width="8" height="4" fill="#b87936"/><rect x="16" y="0" width="4" height="4" fill="#9a642c"/><rect x="20" y="0" width="4" height="4" fill="#d48b3f"/><rect x="24" y="0" width="8" height="4" fill="#e39745"/><rect x="32" y="0" width="4" height="4" fill="#9a642c"/><rect x="36" y="0" width="4" height="4" fill="#d48b3f"/><rect x="40" y="0" width="8" height="4" fill="#b87936"/><rect x="48" y="0" width="16" height="4" fill="#9a642c"/><rect x="0" y="4" width="16" height="4" fill="#a96d30"/><rect x="16" y="4" width="16" height="4" fill="#7f5224"/><rect x="32" y="4" width="8" height="4" fill="#ad7234"/><rect x="40" y="4" width="8" height="4" fill="#b87936"/><rect x="48" y="4" width="8" height="4" fill="#c27f39"/><rect x="56" y="4" width="8" height="4" fill="#ad7234"/><rect x="0" y="8" width="4" height="4" fill="#e39745"/><rect x="4" y="8" width="4" height="4" fill="#8a5826"/><rect x="8" y="8" width="4" height="4" fill="#9a642c"/><rect x="12" y="8" width="4" height="4" fill="#ad7234"/><rect x="16" y="8" width="12" height="4" fill="#9a642c"/><rect x="28" y="8" width="8" height="4" fill="#7f5224"/><rect x="36" y="8" width="8" height="4" fill="#ad7234"/><rect x="44" y="8" width="4" height="4" fill="#a96d30"/><rect x="48" y="8" width="12" height="4" fill="#9a642c"/><rect x="60" y="8" width="4" height="4" fill="#7f5224"/><rect x="0" y="12" width="16" height="4" fill="#e39745"/><rect x="16" y="12" width="4" height="4" fill="#7f5224"/><rect x="20" y="12" width="4" height="4" fill="#e39745"/><rect x="24" y="12" width="4" height="4" fill="#e39745"/><rect x="28" y="12" width="8" height="4" fill="#7a4e22"/><rect x="36" y="12" width="8" height="4" fill="#9a642c"/><rect x="44" y="12" width="4" height="4" fill="#7a4e22"/><rect x="48" y="12" width="4" height="4" fill="#b87936"/><rect x="52" y="12" width="12" height="4" fill="#9a642c"/><rect x="0" y="16" width="4" height="4" fill="#c27f39"/><rect x="4" y="16" width="12" height="4" fill="#8a5826"/><rect x="16" y="16" width="8" height="4" fill="#b87936"/><rect x="24" y="16" width="8" height="4" fill="#855526"/><rect x="32" y="16" width="4" height="4" fill="#7f5224"/><rect x="36" y="16" width="16" height="4" fill="#b87936"/><rect x="52" y="16" width="12" height="4" fill="#b87936"/><rect x="0" y="20" width="8" height="4" fill="#9a642c"/><rect x="8" y="20" width="4" height="4" fill="#c27f39"/><rect x="12" y="20" width="8" height="4" fill="#8a5826"/><rect x="20" y="20" width="4" height="4" fill="#9a642c"/><rect x="24" y="20" width="8" height="4" fill="#7a4e22"/><rect x="32" y="20" width="12" height="4" fill="#855526"/><rect x="44" y="20" width="4" height="4" fill="#7a4e22"/><rect x="48" y="20" width="8" height="4" fill="#d48b3f"/><rect x="56" y="20" width="8" height="4" fill="#c27f39"/><rect x="0" y="24" width="4" height="4" fill="#c27f39"/><rect x="4" y="24" width="4" height="4" fill="#e39745"/><rect x="8" y="24" width="4" height="4" fill="#ad7234"/><rect x="12" y="24" width="4" height="4" fill="#d48b3f"/><rect x="16" y="24" width="4" height="4" fill="#9a642c"/><rect x="20" y="24" width="4" height="4" fill="#855526"/><rect x="24" y="24" width="4" height="4" fill="#855526"/><rect x="28" y="24" width="16" height="4" fill="#9a9a4a"/><rect x="36" y="24" width="8" height="4" fill="#8a8a44"/><rect x="44" y="24" width="20" height="4" fill="#6f7422"/><rect x="0" y="28" width="52" height="4" fill="#6b7024"/><rect x="12" y="28" width="4" height="4" fill="#8c9430"/><rect x="28" y="28" width="4" height="4" fill="#b4b838"/><rect x="32" y="28" width="4" height="4" fill="#9ea235"/></svg>
<div style="left:2534px;top:192px;width:25px;height:2px;background:#4b4b4a;"></div>
<div style="left:2534px;top:1222px;width:25px;height:2px;background:#4b4b4a;"></div>
<svg style="left:2534px;top:194px" width="25" height="1030" fill="none" stroke="#7a7a78" stroke-width="4.2"><path d="M6.2 17.6l6.8-6.8l6.8 6.8"/><path d="M6.2 1012.2l6.8 6.8l6.8-6.8"/></svg>
<div style="left:2536px;top:1152px;width:22px;height:36px;background:#555555;"></div>
<svg style="left:0;top:1439px" width="2559" height="88" viewBox="0 1440 2559 88"><rect x="16" y="1451" width="20" height="2" fill="#6aabf0"/><rect x="16" y="1455" width="16" height="2" fill="#6aabf0"/><rect x="21" y="1459" width="9" height="2" fill="#6aabf0"/><rect x="16" y="1463" width="24" height="2" fill="#6aabf0"/><rect x="16" y="1467" width="8" height="2" fill="#6aabf0"/><rect x="26" y="1467" width="10" height="2" fill="#6aabf0"/><rect x="34.4" y="1455" width="5.6" height="2" fill="#6aabf0"/><rect x="130" y="1467" width="8" height="2" fill="#6aabf0"/><rect x="130" y="1471" width="8" height="2" fill="#6aabf0"/><rect x="130" y="1475" width="8" height="2" fill="#6aabf0"/><path d="M148 1462l11 11.4" stroke="#e0b84c" stroke-width="6" stroke-linecap="round"/><path d="M148 1462l11 11.4" stroke="#fbeeb0" stroke-width="2.8" stroke-linecap="round"/><circle cx="143" cy="1456.6" r="9" fill="#fdfdff" stroke="#93a6d1" stroke-width="2"/><rect x="295.4" y="1467" width="8" height="2" fill="#6aabf0"/><rect x="295.4" y="1471" width="8" height="2" fill="#6aabf0"/><rect x="295.4" y="1475" width="8" height="2" fill="#6aabf0"/><path d="M301 1452v-5q0-1.6 1.6-1.6h5l2 3.4h12.4v4h6l-6.4 9.6z" fill="#fbeeb0" stroke="#e0b84c" stroke-width="1.8" stroke-linejoin="round"/><path d="M314 1463l10.6 9.6" stroke="#e0b84c" stroke-width="6" stroke-linecap="round"/><path d="M314 1463l10.6 9.6" stroke="#fbeeb0" stroke-width="2.8" stroke-linecap="round"/><circle cx="306.4" cy="1455.4" r="8.4" fill="#fdfdff" stroke="#93a6d1" stroke-width="2"/><rect x="510" y="1467" width="8" height="2" fill="#6aabf0"/><rect x="510" y="1471" width="8" height="2" fill="#6aabf0"/><rect x="510" y="1475" width="8" height="2" fill="#6aabf0"/><text x="515.4" y="1474.8" font-family="Liberation Sans" font-weight="bold" font-size="36" fill="#fbeeb0" stroke="#e0b84c" stroke-width="1.8" textLength="22" lengthAdjust="spacingAndGlyphs">?</text><rect x="627" y="1467" width="8" height="2" fill="#6aabf0"/><rect x="627" y="1471" width="8" height="2" fill="#6aabf0"/><rect x="627" y="1475" width="8" height="2" fill="#6aabf0"/><rect x="634.0" y="1466" width="2" height="3" fill="#6faaeb"/><rect x="636.0" y="1463" width="2" height="6" fill="#5b96dc"/><rect x="638.0" y="1459" width="2" height="10" fill="#6faaeb"/><rect x="640.0" y="1454" width="2" height="15" fill="#5b96dc"/><rect x="642.0" y="1449" width="2" height="20" fill="#6faaeb"/><rect x="644.0" y="1455" width="2" height="14" fill="#5b96dc"/><rect x="646.0" y="1459" width="2" height="10" fill="#6faaeb"/><rect x="648.0" y="1462" width="2" height="7" fill="#5b96dc"/><rect x="650.0" y="1464" width="2" height="5" fill="#6faaeb"/><rect x="652.0" y="1461" width="2" height="8" fill="#5b96dc"/><rect x="654.0" y="1459" width="2" height="10" fill="#6faaeb"/><rect x="656.0" y="1463" width="2" height="6" fill="#5b96dc"/><rect x="658.0" y="1466" width="2" height="3" fill="#6faaeb"/><path d="M632.1 1446.9v24.2h27.7" fill="none" stroke="#e4bb4e" stroke-width="3.9"/><rect x="770" y="1467" width="8" height="2" fill="#6aabf0"/><rect x="770" y="1471" width="8" height="2" fill="#6aabf0"/><rect x="770" y="1475" width="8" height="2" fill="#6aabf0"/><path d="M781 1450.2h19.2v7.6h-4.6v-2.2h-5.4l5.6 7.4l-5.6 7.8h5.4v-2.2h4.6v7.6H781v-5l7.6-8.4l-7.6-8z" fill="#6faaeb" stroke="#4a84c6" stroke-width="1.5" stroke-linejoin="round"/><rect x="912" y="1467" width="8" height="2" fill="#6aabf0"/><rect x="912" y="1471" width="8" height="2" fill="#6aabf0"/><rect x="912" y="1475" width="8" height="2" fill="#6aabf0"/><path d="M914.4 1462.5h21.6l8-9.2v3l-7.4 9.2h-22.2z" fill="#4f86c6"/><path d="M922.7 1453.3h21.3l-8 9.2h-21.6z" fill="#74aeec" stroke="#5a90cf" stroke-width="1.2" stroke-linejoin="round"/><g fill="#a9bad8"><rect x="917.4" y="1465.5" width="3.6" height="6"/><rect x="922.8" y="1465.5" width="3.6" height="5.4"/><rect x="928.2" y="1465.5" width="3.6" height="4.6"/><rect x="933.6" y="1465.5" width="3.2" height="3.6"/></g><rect x="1029.6" y="1467" width="8" height="2" fill="#6aabf0"/><rect x="1029.6" y="1471" width="8" height="2" fill="#6aabf0"/><rect x="1029.6" y="1475" width="8" height="2" fill="#6aabf0"/><text x="1029.6" y="1465.6" font-family="Liberation Mono" font-weight="bold" font-size="15.6" fill="#6aabf0" textLength="32.6" lengthAdjust="spacingAndGlyphs">mov</text><g fill="none" stroke="#d2d2d2" stroke-width="2.2" stroke-linejoin="round"><rect x="2439.1" y="1498.7" width="19.7" height="18.3" rx="3"/><path d="M2442.8 1502.6l4-6.4h5l4 6.4z" fill="#3c3a37"/><path d="M2449.3 1506.5h7.6l5 5v9h-12.6z" fill="#3c3a37"/><path d="M2456.6 1506.8v5h5" stroke-width="1.8"/></g></svg>
<div style="left:746px;top:1533.6px;width:54px;height:12px;background:#e9aaa3;border-radius:7px 7px 0 0"></div>
<div style="left:797px;top:1534.4px;width:9px;height:12px;background:#e9aaa3;border-radius:0 8px 0 0"></div>
<div style="left:1211px;top:1536px;width:54px;height:8px;background:#fbf6f4;border-radius:5px 5px 0 0"></div>
<div style="left:0px;top:1528px;width:2559px;height:2px;background:linear-gradient(180deg,rgba(90,75,85,.4),rgba(150,130,145,.12));"></div></body></html>
